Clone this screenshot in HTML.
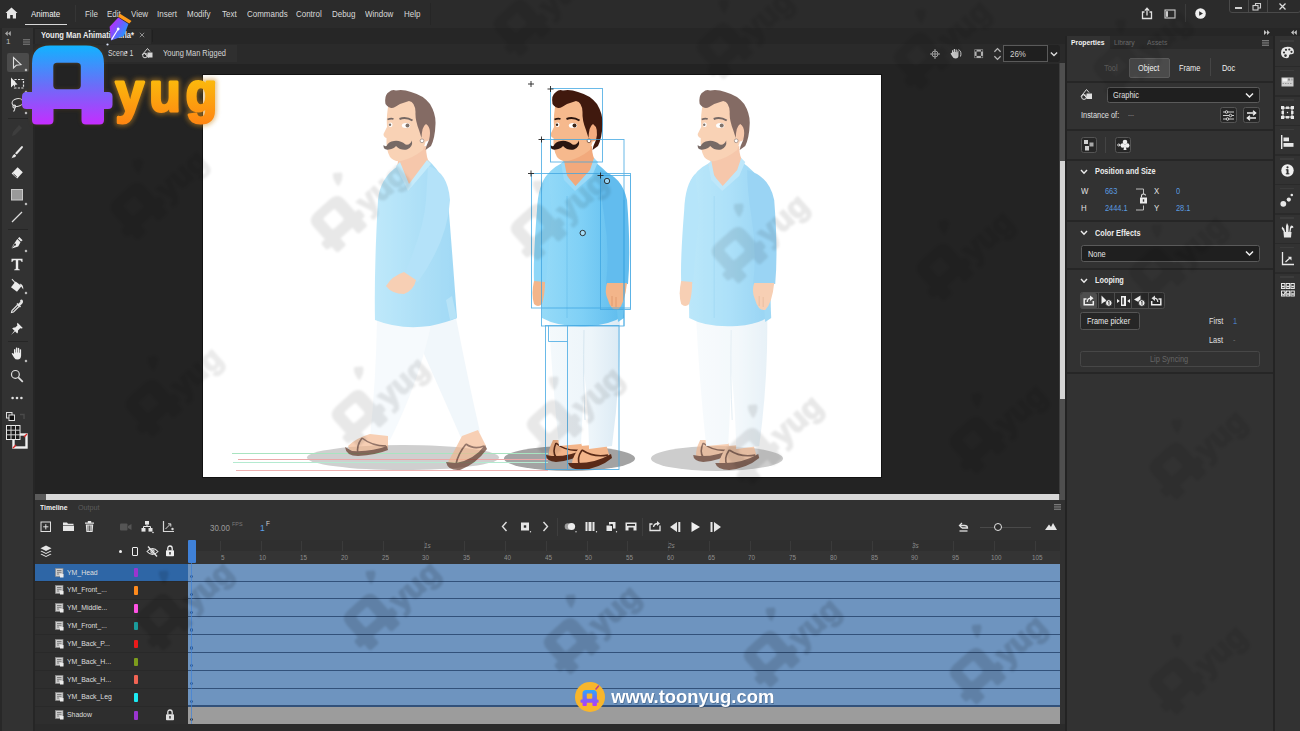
<!DOCTYPE html>
<html lang="en">
<head>
<meta charset="utf-8">
<title>Young Man Animation - Animate</title>
<style>
*{box-sizing:border-box;margin:0;padding:0}
html,body{width:1300px;height:731px;overflow:hidden;background:#242424}
body{font-family:"Liberation Sans",sans-serif;font-size:9px;color:#e4e4e4;position:relative}
#app{position:absolute;left:0;top:0;width:1300px;height:731px;overflow:hidden;background:#242424}
.abs{position:absolute}
.t{position:absolute;white-space:nowrap;line-height:12px;height:12px;transform-origin:0 50%;transform:scaleX(.9)}
svg{position:absolute;overflow:visible}
.p{font-size:8.500px;transform:scaleX(.87)}
.m{font-size:9px;color:#dadada;transform:scaleX(.885)}
/* top bars */
#menubar{left:0;top:0;width:1300px;height:28px;background:#2b2b2b}
#tabbar{left:0;top:28px;width:1066px;height:16px;background:#262626}
#scenebar{left:33px;top:44px;width:1033px;height:20px;background:#2a2a2a}
#tools{left:0;top:28px;width:33px;height:703px;background:#323232}
#stagebg{left:33px;top:64px;width:1027px;height:430px;background:#232323}
#canvas{left:202.700px;top:74.800px;width:678.800px;height:402.300px;background:#fff;outline:1px solid #121212}
/* scrollbars */
#vtrack{left:1059px;top:63px;width:6px;height:430px;background:#3c3c3c}
#htrack{left:35px;top:494px;width:1027px;height:6px;background:#5a5a5a}
/* timeline */
#timeline{left:35px;top:500px;width:1030px;height:231px;background:#313131}
/* properties */
#props{left:1067px;top:36px;width:206px;height:695px;background:#323232}
#strip{left:1275px;top:36px;width:25px;height:695px;background:#323232}
</style>
</head>
<body>
<div id="app">
<div id="menubar" class="abs"></div>
<div id="tabbar" class="abs"></div>
<div id="scenebar" class="abs"></div>
<div id="stagebg" class="abs"></div>
<div id="canvas" class="abs"></div>
<div id="tools" class="abs"></div>
<div id="vtrack" class="abs"></div>
<div id="htrack" class="abs"></div>
<div id="timeline" class="abs"></div>
<div id="props" class="abs"></div>
<div id="strip" class="abs"></div>
<!--MENU--><div id="helpsep" class="abs" style="left:430px;top:3px;width:1px;height:22px;background:#262626"></div><div id="gapbar" class="abs" style="left:1066px;top:28px;width:234px;height:8px;background:#262626"></div><div class="abs" style="left:35px;top:29px;width:116px;height:15px;background:#2d2d2d"></div>
<div class="abs" style="left:60px;top:45px;width:177px;height:16.500px;background:#2f2f2f"></div>
<div class="abs" style="left:1065.200px;top:36px;width:1.800px;height:695px;background:#232323"></div>
<div class="abs" style="left:33px;top:63px;width:2px;height:668px;background:#262626"></div>

<div class="abs" style="left:1229px;top:-1px;width:72px;height:14px;border:1px solid #4a4a4a;border-radius:0 0 3px 3px"></div>
<div class="abs" style="left:1248px;top:0;width:1px;height:13px;background:#4a4a4a"></div>
<div class="abs" style="left:1267px;top:0;width:1px;height:13px;background:#4a4a4a"></div>
<div class="abs" style="left:1235px;top:7px;width:7px;height:2px;background:#d0d0d0"></div>
<svg style="left:1252px;top:2px" width="10" height="10" viewBox="0 0 10 10" fill="none" stroke="#cfcfcf" stroke-width="1.1"><rect x="1" y="3.5" width="5" height="4.5"/><path d="M3.5 3.5V1.5H8.5V6H6"/></svg>
<svg style="left:1278px;top:2px" width="9" height="9" viewBox="0 0 9 9" stroke="#dcdcdc" stroke-width="1.3"><path d="M1.5 1.5L7.5 7.5M7.5 1.5L1.5 7.5"/></svg>
<svg style="left:5px;top:7px" width="13" height="12" viewBox="0 0 13 12"><path d="M6.5 .5L.5 6H2V11.5H5.2V8H7.8V11.5H11V6H12.5Z" fill="#e6e6e6"/></svg>
<span class="t m" style="left:31px;top:7.500px;color:#f2f2f2">Animate</span>
<div class="abs" style="left:25px;top:24px;width:42px;height:1px;background:#d8d8d8"></div>
<div class="abs" style="left:75px;top:5px;width:1px;height:17px;background:#353535"></div>
<span class="t m" style="left:84.5px;top:7.500px">File</span>
<span class="t m" style="left:107px;top:7.500px">Edit</span>
<span class="t m" style="left:130.5px;top:7.500px">View</span>
<span class="t m" style="left:157px;top:7.500px">Insert</span>
<span class="t m" style="left:186.5px;top:7.500px">Modify</span>
<span class="t m" style="left:222px;top:7.500px">Text</span>
<span class="t m" style="left:246.5px;top:7.500px">Commands</span>
<span class="t m" style="left:296px;top:7.500px">Control</span>
<span class="t m" style="left:332px;top:7.500px">Debug</span>
<span class="t m" style="left:365px;top:7.500px">Window</span>
<span class="t m" style="left:404px;top:7.500px">Help</span>
<svg style="left:1141px;top:7px" width="12" height="13" viewBox="0 0 12 13" fill="none" stroke="#e0e0e0" stroke-width="1.3"><path d="M3.5 5H1.5V11.5H10.5V5H8.5"/><path d="M6 8.5V1.5M3.8 3.6L6 1.3L8.2 3.6"/></svg>
<svg style="left:1164px;top:9px" width="12" height="10" viewBox="0 0 12 10" fill="none" stroke="#cfcfcf" stroke-width="1.1"><rect x="1" y="1" width="10" height="8"/><rect x="2" y="2.2" width="2" height="5.6" fill="#cfcfcf" stroke="none"/></svg>
<div class="abs" style="left:1185px;top:4px;width:1px;height:18px;background:#3c3c3c"></div>
<svg style="left:1195px;top:8px" width="11" height="11" viewBox="0 0 11 11"><circle cx="5.5" cy="5.5" r="5.3" fill="#f0f0f0"/><path d="M4.2 3.2V7.8L8 5.5Z" fill="#2b2b2b"/></svg>
<!-- collapse arrows -->
<svg style="left:1264px;top:30px" width="6" height="5" viewBox="0 0 6 5" fill="#c4c4c4"><path d="M0 0L2.800 2.500L0 5ZM3 0L5.800 2.500L3 5Z"/></svg>
<svg style="left:1291px;top:30px" width="6" height="5" viewBox="0 0 6 5" fill="#c4c4c4"><path d="M2.800 0L0 2.500L2.800 5ZM5.800 0L3 2.500L5.800 5Z"/></svg>
<svg style="left:4.500px;top:30.500px" width="6" height="5" viewBox="0 0 6 5" fill="#a8a8a8"><path d="M2.800 0L0 2.500L2.800 5ZM5.800 0L3 2.500L5.800 5Z"/></svg>
<!-- doc tab -->
<span class="t" style="left:41px;top:29px;font-weight:bold;color:#ececec;font-size:8.5px;transform:scaleX(.89)">Young Man Animation.fla*</span>
<svg style="left:139px;top:32px" width="6" height="6" viewBox="0 0 6 6" stroke="#9a9a9a" stroke-width=".9"><path d="M.8 .8L5.2 5.2M5.2 .8L.8 5.2"/></svg>
<div class="abs" style="left:152px;top:30px;width:1px;height:12px;background:#202020"></div>
<!-- scene bar -->
<span class="t m" style="left:107.500px;top:47px;color:#d6d6d6;transform:scaleX(.77)">Scene 1</span>
<svg style="left:141px;top:47px" width="13" height="12" viewBox="0 0 13 12" fill="none" stroke="#d6d6d6" stroke-width="1"><path d="M1 8L6.5 1.5L9 4.5"/><path d="M3.5 6.5L8 10.5"/><circle cx="4" cy="8.5" r="2.3"/><rect x="6.5" y="5.5" width="5" height="5" fill="#d6d6d6" stroke="none"/></svg>
<span class="t m" style="left:162.500px;top:47px;color:#d6d6d6;transform:scaleX(.825)">Young Man Rigged</span>
<!-- stage controls -->
<svg style="left:929.500px;top:48.500px" width="10" height="10" viewBox="0 0 11 11" fill="none" stroke="#b8b8b8" stroke-width="1"><circle cx="5.5" cy="5.5" r="3.3"/><path d="M5.5 0V11M0 5.5H11"/></svg>
<svg style="left:949px;top:47px" width="14" height="13" viewBox="0 0 14 13" fill="#c8c8c8"><path d="M3 5.5V3.2h1.2V5h.6V2h1.2V5h.6V2.4h1.2V5.2h.6V3.4h1.1V8.5Q9.5 11.5 6.5 11.5Q4.3 11.5 3.2 9.3L1.5 6.6L2.4 6Z"/><path d="M9.5 2.5Q13 4.5 11.5 9.5" fill="none" stroke="#c8c8c8"/></svg>
<svg style="left:974px;top:49px" width="9.500" height="9.500" viewBox="0 0 11 11"><rect x=".5" y=".5" width="10" height="10" fill="#b0b0b0"/><rect x="3" y="3" width="5" height="5" fill="#2c2c2c"/><rect x="1" y="1" width="2" height="2" fill="#2c2c2c"/><rect x="8" y="1" width="2" height="2" fill="#2c2c2c"/><rect x="1" y="8" width="2" height="2" fill="#2c2c2c"/><rect x="8" y="8" width="2" height="2" fill="#2c2c2c"/></svg>
<svg style="left:993px;top:46px" width="9" height="16" viewBox="0 0 10 18" fill="none" stroke="#b8b8b8" stroke-width="1.4"><path d="M1.5 6.5L5 3L8.5 6.5M1.5 11.5L5 15L8.5 11.5"/></svg>
<div class="abs" style="left:1003px;top:45px;width:45px;height:17px;background:#1f1f1f;border:1px solid #5a5a5a"></div>
<span class="t m" style="left:1010px;top:47.5px;color:#d0d0d0">26%</span>
<div class="abs" style="left:1048px;top:45px;width:11.500px;height:17px;background:#222;border-radius:0 3px 3px 0"></div><svg style="left:1049.500px;top:50.500px" width="8" height="6.500" viewBox="0 0 9 7" fill="none" stroke="#dcdcdc" stroke-width="1.5"><path d="M1 1.5L4.5 5L8 1.5"/></svg>
<!--/MENU-->
<!--TOOLS--><div class="abs" style="left:0;top:28px;width:1.500px;height:703px;background:#282828"></div><div class="abs" style="left:8px;top:118px;width:20px;height:1px;background:#262626"></div>
<span class="t" style="left:6px;top:36px;font-size:8px;color:#bdbdbd;transform:none">1</span>
<svg style="left:23px;top:39px" width="7" height="6" viewBox="0 0 7 6" fill="#6c6c6c"><rect width="7" height="1.4"/><rect y="2.3" width="7" height="1.4"/><rect y="4.6" width="7" height="1.4"/></svg>
<div class="abs" style="left:6.5px;top:53px;width:22px;height:19px;background:#4b4b4b;border-radius:2px"></div>
<svg style="left:12px;top:56px" width="11" height="14" viewBox="0 0 11 14" fill="none" stroke="#dedede" stroke-width="1.1"><path d="M1.5 1.5V12L4.3 9.3L9 8.7Z"/></svg>
<svg style="left:9px;top:76px" width="18" height="16" viewBox="0 0 18 16"><rect x="5.5" y="3.5" width="9" height="8.5" fill="none" stroke="#e0e0e0" stroke-width="1.2" stroke-dasharray="2.2 1.3"/><path d="M2 1.5V11.5L4.6 9L8.5 8.6Z" fill="#ececec"/></svg>
<svg style="left:10px;top:97px" width="15" height="16" viewBox="0 0 15 16" fill="none" stroke="#dcdcdc" stroke-width="1.1"><ellipse cx="7.5" cy="5.5" rx="5.5" ry="3.8" transform="rotate(-12 7.5 5.5)"/><circle cx="4.3" cy="9.5" r="1.4"/><path d="M4.8 11Q5 13 3.5 14.5"/></svg>
<svg style="left:11px;top:124px" width="12" height="13" viewBox="0 0 12 13" fill="#3d3d3d"><path d="M8 1L11 4L4 11L1 12L2 8Z"/></svg>
<svg style="left:10px;top:145px" width="14" height="15" viewBox="0 0 14 15" fill="#e8e8e8"><path d="M12.5 1.2Q13.4 1.8 12.7 2.8L6.8 9.6L5 8.2L11.2 1.4Q11.8.8 12.5 1.2Z"/><path d="M4.3 8.9L6.1 10.3Q5.8 12.5 3.6 12.6Q2.4 12.8 1.5 13.6Q2.6 10 4.3 8.9Z"/></svg>
<svg style="left:10px;top:166px" width="14" height="14" viewBox="0 0 14 14"><path d="M7.6 1.2L12.8 6.2L7.2 12.5L1.6 7.5Z" fill="#ececec"/><path d="M3.5 8L6.8 11" stroke="#323232" stroke-width="1"/></svg>
<svg style="left:11px;top:189px" width="15" height="15" viewBox="0 0 15 15"><rect x=".5" y=".5" width="11" height="10.5" fill="#9a9a9a" stroke="#c9c9c9"/></svg>
<svg style="left:11px;top:211px" width="12" height="12" viewBox="0 0 12 12" stroke="#dcdcdc" stroke-width="1.2"><path d="M1 11L11 1"/></svg>
<div class="abs" style="left:8px;top:229px;width:20px;height:1px;background:#262626"></div>
<svg style="left:10px;top:236px" width="14" height="14" viewBox="0 0 14 14" fill="#ececec"><path d="M9.3 1L12.6 4.3L11 5.6L7.9 2.5Z"/><path d="M7.3 3.1L10.5 6.3L8.2 10.5L1.6 12.6L4.6 9.6Q5.8 9.8 6 8.7Q6 7.4 4.8 7.6Q3.8 7.8 4 9L1.2 12Z"/></svg>
<svg style="left:11px;top:258px" width="12" height="13" viewBox="0 0 12 13" fill="#ececec"><path d="M.5 .8H11.5V4H10.6Q10.4 2.3 9 2.2H7.2V10.4Q7.3 11.4 8.8 11.5V12.3H3.2V11.5Q4.7 11.4 4.8 10.4V2.2H3Q1.6 2.3 1.4 4H.5Z"/></svg>
<svg style="left:10px;top:278px" width="15" height="15" viewBox="0 0 15 15" fill="#ececec"><path d="M5.6 3.4L11.6 8L7 13.8L1 9.2Z"/><path d="M2.2 .8L6.6 5.6L6 6.2L1.6 1.4Z"/><path d="M9.8 5.6Q13.5 6.5 13.3 11.5Q12 9.5 10.6 7.4Z"/></svg>
<svg style="left:10px;top:300px" width="14" height="14" viewBox="0 0 14 14" fill="none" stroke="#e4e4e4" stroke-width="1.1"><path d="M7.5 5L2 10.5L1.5 12.5L3.5 12L9 6.5"/><path d="M7 3.5L10.5 7" stroke-width="1.6"/><path d="M8.8 5.2L11 3Q12.3 1.6 11.4 .9" stroke-width="2.6" stroke-linecap="round"/></svg>
<svg style="left:10px;top:322px" width="14" height="14" viewBox="0 0 14 14" fill="#ececec"><path d="M7.6 .8L12.8 6L11.6 6.6L10.2 6.2L8 8.4Q8.4 10.4 7.2 11.4L2.2 6.4Q3.4 5.2 5.2 5.6L7.4 3.4L7 2Z"/><path d="M4.4 8.8L5 9.4L1 13Z"/></svg>
<div class="abs" style="left:8px;top:341px;width:20px;height:1px;background:#262626"></div>
<svg style="left:10px;top:346px" width="15" height="15" viewBox="0 0 15 15" fill="#ececec"><path d="M4 8V3.4Q4.7 2.6 5.4 3.4V6.6H5.9V1.8Q6.6 1 7.3 1.8V6.4H7.8V2.2Q8.5 1.4 9.2 2.2V6.8H9.7V3.6Q10.4 2.8 11.1 3.6V9.5Q11 13.4 7.6 13.6Q5.2 13.6 4 11.4L1.6 7.6Q2.4 6.6 3.4 7.6Z"/></svg>
<svg style="left:10px;top:369px" width="14" height="14" viewBox="0 0 14 14" fill="none" stroke="#dedede" stroke-width="1.2"><circle cx="5.4" cy="5.4" r="3.9"/><path d="M8.3 8.3L12.8 12.8" stroke-width="1.7"/></svg>
<svg style="left:11px;top:396px" width="12" height="4" viewBox="0 0 12 4" fill="#e0e0e0"><circle cx="1.6" cy="2" r="1.3"/><circle cx="6" cy="2" r="1.3"/><circle cx="10.4" cy="2" r="1.3"/></svg>
<svg style="left:6px;top:412px" width="22" height="10" viewBox="0 0 22 10"><rect x=".5" y=".5" width="5.5" height="5.5" fill="#323232" stroke="#dcdcdc"/><rect x="3" y="3" width="5.5" height="5.5" fill="#111" stroke="#dcdcdc"/><path d="M14 2.5H18V7" fill="none" stroke="#4a4a4a" stroke-width="1.4"/></svg>
<svg style="left:6px;top:425px" width="22" height="24" viewBox="0 0 22 24"><rect x="7.5" y="9.5" width="13" height="13" fill="none" stroke="#f0f0f0" stroke-width="2.4"/><path d="M7 23L21 9" stroke="#e02020" stroke-width="1.3"/><rect x="9.6" y="11.6" width="8.8" height="8.8" fill="#323232"/><rect x=".5" y=".5" width="13.5" height="14" fill="#1a1a1a" stroke="#e8e8e8"/><path d="M5 .5V14.5M9.5 .5V14.5M.5 5.2H14M.5 9.8H14" stroke="#d0d0d0" stroke-width="1"/></svg>
<div class="abs" style="left:25px;top:69px;width:2px;height:2px;background:#d0d0d0;transform:rotate(45deg)"></div>
<div class="abs" style="left:25px;top:91px;width:2px;height:2px;background:#d0d0d0;transform:rotate(45deg)"></div>
<div class="abs" style="left:25px;top:112px;width:2px;height:2px;background:#d0d0d0;transform:rotate(45deg)"></div>
<div class="abs" style="left:25px;top:203px;width:2px;height:2px;background:#d0d0d0;transform:rotate(45deg)"></div>
<div class="abs" style="left:25px;top:250px;width:2px;height:2px;background:#d0d0d0;transform:rotate(45deg)"></div>
<div class="abs" style="left:25px;top:292px;width:2px;height:2px;background:#d0d0d0;transform:rotate(45deg)"></div>
<div class="abs" style="left:25px;top:360px;width:2px;height:2px;background:#d0d0d0;transform:rotate(45deg)"></div>
<!--/TOOLS-->
<!--STAGE--><svg id="stage" style="left:0;top:0" width="1300" height="731" viewBox="0 0 1300 731">
<ellipse cx="403" cy="457.500" rx="96" ry="12.500" fill="#cfcfcf"/>
<ellipse cx="569.500" cy="458.500" rx="65.500" ry="12.500" fill="#a3a3a3"/>
<ellipse cx="717" cy="458.500" rx="66" ry="12.500" fill="#cdcdcd"/>
<g stroke-width="1" fill="none"><path d="M232 453.500H548" stroke="#a8e4c0"/><path d="M238 459.500H548" stroke="#eaa8a8"/><path d="M233 462.500H548" stroke="#b4ead0"/><path d="M236 470.500H548" stroke="#eeb0b0"/></g>
<g opacity="0.64">
<linearGradient id="shw" x1="376" y1="0" x2="456" y2="0" gradientUnits="userSpaceOnUse"><stop offset="0" stop-color="#9adcf8"/><stop offset="1" stop-color="#6cc4f0"/></linearGradient>
<!-- back leg (right) -->
<path d="M415 320L456 318Q468 380 480 432L462 440Q440 390 420 345Z" fill="#eaf3f9"/>
<path d="M462 436Q456 448 448 462Q452 470 462 468Q478 460 486 446L478 430Z" fill="#f3b58a"/>
<path d="M446 462Q448 471 460 470Q476 464 487 449L485 445Q474 460 456 463Z" fill="#5a2a17"/>
<path d="M466 444Q458 454 456 464M466 444Q474 450 484 446" fill="none" stroke="#5a2a17" stroke-width="1.600"/>
<!-- front leg (left) -->
<path d="M377 320L432 320Q420 380 390 440L370 438Q376 380 377 320Z" fill="#f2f8fc"/>
<path d="M370 434Q356 438 348 446Q350 454 362 454Q378 452 388 448L388 436Z" fill="#f3b58a"/>
<path d="M345 447Q346 456 358 456Q376 455 388 450L387 446Q372 452 352 451Z" fill="#5a2a17"/>
<path d="M362 438Q356 446 358 454M362 438Q372 446 386 446" fill="none" stroke="#5a2a17" stroke-width="1.600"/>
<!-- torso -->
<path d="M398 166Q380 178 378 200Q374 270 375 320Q400 330 430 326Q448 322 457 318Q452 250 448 200Q446 176 428 160L408 186Z" fill="url(#shw)"/>
<path d="M446 300L452 296L457 318L450 320Z" fill="#8fd4f4"/>
<!-- arm -->
<path d="M428 166Q448 172 450 200Q448 240 418 282L404 274Q424 230 426 200Z" fill="#8ad3f6"/>
<path d="M404 272Q392 276 386 286Q392 294 404 294Q414 290 416 280Z" fill="#f3b58a"/>
<!-- neck -->
<path d="M398 150L426 146Q426 158 430 164L408 188L397 166Q399 160 398 150Z" fill="#f2a97c"/>
<path d="M396 166L400 162L409 184L427 160L431 164L408 191Z" fill="#a6e0fa"/>
<g transform="translate(-167 0)">
<!-- face -->
<path d="M556 102Q553 116 554 127L550.500 134Q550.500 137 553.500 138Q553 150 557 157Q561 162 568 161Q580 158 590 150L597 128L588 100Z" fill="#f6b98d"/>
<ellipse cx="593.500" cy="133" rx="4.600" ry="8.500" fill="#f3ab7e"/>
<circle cx="589" cy="140.800" r="1.900" fill="#fff" stroke="#5a3a2a" stroke-width=".700"/>
<!-- hair -->
<path d="M552.500 104Q551 95 556 92Q559 89 563 90.500Q570 89 578 92Q590 95 597 104Q603 114 602.500 124Q602 138 598 146L592.500 150Q593 146 596 140Q599 128 593 124Q589 126 588.500 138L586 130Q582 120 582.500 112Q582 102 576 101Q568 103 562 107Q557 110 552.500 104Z" fill="#40190e"/>
<!-- brows/eyes -->
<path d="M566.500 119Q573 116.500 579.500 120.500" stroke="#2a140e" stroke-width="2" fill="none"/>
<path d="M554.500 119.500Q558 118 560.500 119" stroke="#2a140e" stroke-width="1.700" fill="none"/>
<ellipse cx="573" cy="125.500" rx="4.200" ry="2.500" fill="#fff"/><circle cx="574.500" cy="125.500" r="2" fill="#3a2416"/>
<ellipse cx="557.500" cy="124.800" rx="2" ry="2.200" fill="#fff"/><circle cx="557" cy="124.800" r="1.200" fill="#3a2416"/>
<!-- moustache -->
<path d="M550.500 145Q550 150.500 556 149.500Q561 148.500 563 146Q568 151 574 149.500Q580 147 579 140.500Q577 145.500 572.500 144.500Q567 140 561 141Q555.500 141.500 553.500 146Q551.500 146.500 550.500 145Z" fill="#2a1510"/>
</g>
</g>
<g transform="translate(147.2 0)" opacity="0.64">
<linearGradient id="shr" x1="534" y1="0" x2="630" y2="0" gradientUnits="userSpaceOnUse"><stop offset="0" stop-color="#9adcf8"/><stop offset=".5" stop-color="#7fd0f6"/><stop offset="1" stop-color="#58b8ec"/></linearGradient>
<linearGradient id="ptr" x1="548" y1="0" x2="620" y2="0" gradientUnits="userSpaceOnUse"><stop offset="0" stop-color="#f4f9fc"/><stop offset=".6" stop-color="#edf5fa"/><stop offset="1" stop-color="#dbeaf4"/></linearGradient>
<!-- feet -->
<path d="M553 440Q548 450 549 456Q560 462 584 452L580 440Z" fill="#f3b58a"/>
<path d="M546 455Q546 461 556 462Q572 461 586 452L585 449Q568 457 552 456Z" fill="#5a2a17"/>
<path d="M556 443Q552 452 556 457M556 443Q566 452 582 450" fill="none" stroke="#5a2a17" stroke-width="1.600"/>
<path d="M580 446Q572 458 572 463Q590 468 610 458L606 444Z" fill="#f3b58a"/>
<path d="M568 463Q570 470 582 470Q600 468 612 458L611 454Q594 464 574 463Z" fill="#5a2a17"/>
<path d="M582 450Q576 459 580 465M582 450Q594 458 608 455" fill="none" stroke="#5a2a17" stroke-width="1.600"/>
<!-- pants -->
<path d="M549 318L620 314Q621 380 612 446L589 449Q588 400 584 372Q583 410 581 444L559 446Q552 380 549 318Z" fill="url(#ptr)"/>
<path d="M584 330Q583 380 585 420" fill="none" stroke="#d6e6f0" stroke-width="1"/>
<!-- torso -->
<path d="M562 163Q548 170 543 182Q541 250 542 318Q560 328 590 326Q612 324 623 316Q624 250 622 200Q618 178 592 160L575 188Z" fill="url(#shr)"/>
<path d="M616 300L623 296L624 318L618 322Z" fill="#6cc4f0"/>
<!-- back arm (right side of picture) -->
<path d="M600 170Q622 176 627 200Q631 250 628 284L606 284Q610 250 604 215Q600 190 600 170Z" fill="#62bcee"/>
<path d="M607 283Q604 292 608 300Q611 311 618 310Q625 303 627 283Z" fill="#f3b58a"/>
<path d="M612 296V306M616 297V307" stroke="#dc9468" stroke-width=".8"/>
<!-- front arm (left) -->
<path d="M548 174Q538 184 537 210Q533 260 534 282L546 284Q548 250 552 215Z" fill="#8ed7f8"/>
<path d="M534 281Q531 294 534 304Q538 308 542 304Q545 294 545 282Z" fill="#f3b58a"/>
<path d="M567 196V318" stroke="#6cc2ee" stroke-width=".800" fill="none"/>
<!-- neck -->
<path d="M565 152L592 146Q592 158 597 163L575 189L561 165Q566 160 565 152Z" fill="#f2a97c"/>
<path d="M561 164L564 160.500L567 176L575.500 186L590 170L594 158L598 162L592 176L575 191L564 180Z" fill="#9bdaf8"/>
<g transform="translate(0 0)">
<!-- face -->
<path d="M556 102Q553 116 554 127L550.500 134Q550.500 137 553.500 138Q553 150 557 157Q561 162 568 161Q580 158 590 150L597 128L588 100Z" fill="#f6b98d"/>
<ellipse cx="593.500" cy="133" rx="4.600" ry="8.500" fill="#f3ab7e"/>
<circle cx="589" cy="140.800" r="1.900" fill="#fff" stroke="#5a3a2a" stroke-width=".700"/>
<!-- hair -->
<path d="M552.500 104Q551 95 556 92Q559 89 563 90.500Q570 89 578 92Q590 95 597 104Q603 114 602.500 124Q602 138 598 146L592.500 150Q593 146 596 140Q599 128 593 124Q589 126 588.500 138L586 130Q582 120 582.500 112Q582 102 576 101Q568 103 562 107Q557 110 552.500 104Z" fill="#40190e"/>
<!-- brows/eyes -->
<path d="M566.500 119Q573 116.500 579.500 120.500" stroke="#2a140e" stroke-width="2" fill="none"/>
<path d="M554.500 119.500Q558 118 560.500 119" stroke="#2a140e" stroke-width="1.700" fill="none"/>
<ellipse cx="573" cy="125.500" rx="4.200" ry="2.500" fill="#fff"/><circle cx="574.500" cy="125.500" r="2" fill="#3a2416"/>
<ellipse cx="557.500" cy="124.800" rx="2" ry="2.200" fill="#fff"/><circle cx="557" cy="124.800" r="1.200" fill="#3a2416"/>
<!-- moustache -->
<path d="M550.500 145Q550 150.500 556 149.500Q561 148.500 563 146Q568 151 574 149.500Q580 147 579 140.500Q577 145.500 572.500 144.500Q567 140 561 141Q555.500 141.500 553.500 146Q551.500 146.500 550.500 145Z" fill="#2a1510"/>
</g>
</g>
<g transform="translate(0 0)" opacity="1">
<linearGradient id="shm" x1="534" y1="0" x2="630" y2="0" gradientUnits="userSpaceOnUse"><stop offset="0" stop-color="#9adcf8"/><stop offset=".5" stop-color="#7fd0f6"/><stop offset="1" stop-color="#58b8ec"/></linearGradient>
<linearGradient id="ptm" x1="548" y1="0" x2="620" y2="0" gradientUnits="userSpaceOnUse"><stop offset="0" stop-color="#f4f9fc"/><stop offset=".6" stop-color="#edf5fa"/><stop offset="1" stop-color="#dbeaf4"/></linearGradient>
<!-- feet -->
<path d="M553 440Q548 450 549 456Q560 462 584 452L580 440Z" fill="#f3b58a"/>
<path d="M546 455Q546 461 556 462Q572 461 586 452L585 449Q568 457 552 456Z" fill="#5a2a17"/>
<path d="M556 443Q552 452 556 457M556 443Q566 452 582 450" fill="none" stroke="#5a2a17" stroke-width="1.600"/>
<path d="M580 446Q572 458 572 463Q590 468 610 458L606 444Z" fill="#f3b58a"/>
<path d="M568 463Q570 470 582 470Q600 468 612 458L611 454Q594 464 574 463Z" fill="#5a2a17"/>
<path d="M582 450Q576 459 580 465M582 450Q594 458 608 455" fill="none" stroke="#5a2a17" stroke-width="1.600"/>
<!-- pants -->
<path d="M549 318L620 314Q621 380 612 446L589 449Q588 400 584 372Q583 410 581 444L559 446Q552 380 549 318Z" fill="url(#ptm)"/>
<path d="M584 330Q583 380 585 420" fill="none" stroke="#d6e6f0" stroke-width="1"/>
<!-- torso -->
<path d="M562 163Q548 170 543 182Q541 250 542 318Q560 328 590 326Q612 324 623 316Q624 250 622 200Q618 178 592 160L575 188Z" fill="url(#shm)"/>
<path d="M616 300L623 296L624 318L618 322Z" fill="#6cc4f0"/>
<!-- back arm (right side of picture) -->
<path d="M600 170Q622 176 627 200Q631 250 628 284L606 284Q610 250 604 215Q600 190 600 170Z" fill="#62bcee"/>
<path d="M607 283Q604 292 608 300Q611 311 618 310Q625 303 627 283Z" fill="#f3b58a"/>
<path d="M612 296V306M616 297V307" stroke="#dc9468" stroke-width=".8"/>
<!-- front arm (left) -->
<path d="M548 174Q538 184 537 210Q533 260 534 282L546 284Q548 250 552 215Z" fill="#8ed7f8"/>
<path d="M534 281Q531 294 534 304Q538 308 542 304Q545 294 545 282Z" fill="#f3b58a"/>
<path d="M567 196V318" stroke="#6cc2ee" stroke-width=".800" fill="none"/>
<!-- neck -->
<path d="M565 152L592 146Q592 158 597 163L575 189L561 165Q566 160 565 152Z" fill="#f2a97c"/>
<path d="M561 164L564 160.500L567 176L575.500 186L590 170L594 158L598 162L592 176L575 191L564 180Z" fill="#9bdaf8"/>
<g transform="translate(0 0)">
<!-- face -->
<path d="M556 102Q553 116 554 127L550.500 134Q550.500 137 553.500 138Q553 150 557 157Q561 162 568 161Q580 158 590 150L597 128L588 100Z" fill="#f6b98d"/>
<ellipse cx="593.500" cy="133" rx="4.600" ry="8.500" fill="#f3ab7e"/>
<circle cx="589" cy="140.800" r="1.900" fill="#fff" stroke="#5a3a2a" stroke-width=".700"/>
<!-- hair -->
<path d="M552.500 104Q551 95 556 92Q559 89 563 90.500Q570 89 578 92Q590 95 597 104Q603 114 602.500 124Q602 138 598 146L592.500 150Q593 146 596 140Q599 128 593 124Q589 126 588.500 138L586 130Q582 120 582.500 112Q582 102 576 101Q568 103 562 107Q557 110 552.500 104Z" fill="#40190e"/>
<!-- brows/eyes -->
<path d="M566.500 119Q573 116.500 579.500 120.500" stroke="#2a140e" stroke-width="2" fill="none"/>
<path d="M554.500 119.500Q558 118 560.500 119" stroke="#2a140e" stroke-width="1.700" fill="none"/>
<ellipse cx="573" cy="125.500" rx="4.200" ry="2.500" fill="#fff"/><circle cx="574.500" cy="125.500" r="2" fill="#3a2416"/>
<ellipse cx="557.500" cy="124.800" rx="2" ry="2.200" fill="#fff"/><circle cx="557" cy="124.800" r="1.200" fill="#3a2416"/>
<!-- moustache -->
<path d="M550.500 145Q550 150.500 556 149.500Q561 148.500 563 146Q568 151 574 149.500Q580 147 579 140.500Q577 145.500 572.500 144.500Q567 140 561 141Q555.500 141.500 553.500 146Q551.500 146.500 550.500 145Z" fill="#2a1510"/>
</g>
</g>
<g fill="none" stroke="#3fa6e2" stroke-width=".9" opacity=".85">
<rect x="550.500" y="88.500" width="52" height="73.500"/>
<rect x="541.500" y="139.500" width="82.500" height="186.500"/>
<rect x="531.500" y="173.500" width="99" height="134.500"/>
<rect x="600.500" y="175.500" width="30" height="134"/>
<rect x="545.500" y="325.500" width="73.500" height="144"/>
<path d="M567.500 325V469M548.500 341.500H567.500M548.500 325V341.500"/>
<path d="M624 200V326"/>
</g>
<g stroke="#222" stroke-width=".9" fill="none">
<path d="M528 84H534M531 81V87M547.500 89H553.500M550.500 86V92M538.500 139.500H544.500M541.500 136.500V142.500M528 173.500H534M531 170.500V176.500M597.500 175.500H603.500M600.500 172.500V178.500"/>
<circle cx="607" cy="181" r="2.700" fill="#bfe6f8" fill-opacity=".6"/><circle cx="582.700" cy="233" r="2.700" fill="#bfe6f8" fill-opacity=".6"/>
</g>
</svg>
<!--/STAGE-->
<!--TIMELINE--><span class="t" style="left:40px;top:501.5px;font-weight:bold;font-size:8px;color:#f0f0f0;transform:scaleX(.85)">Timeline</span>
<span class="t" style="left:78px;top:501.5px;font-size:8px;color:#5c5c5c;transform:scaleX(.9)">Output</span>
<svg style="left:1054px;top:504px" width="7" height="6" viewBox="0 0 7 6" fill="#7a7a7a"><rect width="7" height="1.300"/><rect y="2.300" width="7" height="1.300"/><rect y="4.600" width="7" height="1.300"/></svg>
<svg style="left:40px;top:521px" width="12" height="12" viewBox="0 0 12 12" fill="none" stroke="#e0e0e0" stroke-width="1"><rect x="1" y="1" width="9.500" height="9.500"/><path d="M5.800 3.200V8.400M3.200 5.800H8.400"/></svg>
<svg style="left:62px;top:521px" width="13" height="11" viewBox="0 0 13 11" fill="#e6e6e6"><path d="M1 1.500H5L6 2.800H11.500V4H1Z"/><path d="M1 4.600H12V10H1Z"/></svg>
<svg style="left:84px;top:520px" width="11" height="13" viewBox="0 0 11 13" fill="#e6e6e6"><path d="M1 2.500H10V3.800H1ZM3.800 1H7.200V2.500H3.800Z"/><path d="M1.800 4.500H9.200L8.600 12H2.400Z"/><path d="M4 5.500V11M5.500 5.500V11M7 5.500V11" stroke="#2c2c2c" stroke-width=".700"/></svg>
<svg style="left:120px;top:523px" width="12" height="8" viewBox="0 0 12 8" fill="#555"><rect x="0" y=".500" width="7.500" height="7" rx="1"/><path d="M8 3L11.500 1V7L8 5Z"/></svg>
<svg style="left:141px;top:520px" width="13" height="14" viewBox="0 0 13 14" fill="#e4e4e4"><rect x="4" y="1" width="4" height="3.600"/><rect x="0.500" y="8" width="4" height="3.600"/><rect x="7.500" y="8" width="4" height="3.600"/><path d="M6 4.500V6.500M2.500 8V6.500H9.500V8" fill="none" stroke="#e4e4e4" stroke-width="1"/><circle cx="12" cy="12.500" r=".800"/></svg>
<svg style="left:162px;top:520px" width="13" height="13" viewBox="0 0 13 13" fill="none" stroke="#d8d8d8" stroke-width="1.200"><path d="M1.500 1V11.500H12"/><path d="M3.500 9L8.500 4M6 3.800H8.800V6.600" stroke-width="1"/><circle cx="10.500" cy="9" r=".600"/></svg>
<span class="t" style="left:210px;top:521.5px;font-size:9px;color:#9c9c9c;transform:scaleX(.88)">30.00</span>
<span class="t" style="left:232px;top:517.5px;font-size:6px;color:#7a7a7a;transform:scaleX(.9)">FPS</span>
<span class="t" style="left:260px;top:522px;font-size:8.500px;color:#5aa0ea;transform:none">1</span>
<span class="t" style="left:266px;top:518px;font-size:6.500px;color:#d0d0d0;transform:none">F</span>
<svg style="left:501px;top:521px" width="7" height="11" viewBox="0 0 7 11" fill="none" stroke="#e0e0e0" stroke-width="1.400"><path d="M5.500 1L1.500 5.500L5.500 10"/></svg>
<svg style="left:520px;top:521px" width="12" height="12" viewBox="0 0 12 12"><rect x="1" y="1.500" width="8" height="8" fill="#e6e6e6"/><rect x="3.800" y="4.300" width="2.400" height="2.400" fill="#2c2c2c"/><circle cx="10.500" cy="10.800" r=".700" fill="#ddd"/></svg>
<svg style="left:542px;top:521px" width="7" height="11" viewBox="0 0 7 11" fill="none" stroke="#e0e0e0" stroke-width="1.400"><path d="M1.500 1L5.500 5.500L1.500 10"/></svg>
<div class="abs" style="left:557px;top:518px;width:1px;height:18px;background:#3e3e3e"></div>
<svg style="left:564px;top:521px" width="13" height="12" viewBox="0 0 13 12"><circle cx="4" cy="5.500" r="3.300" fill="#9a9a9a"/><circle cx="7.500" cy="5.500" r="3.600" fill="#ececec"/><circle cx="12" cy="10.800" r=".700" fill="#ddd"/></svg>
<svg style="left:585px;top:521px" width="13" height="12" viewBox="0 0 13 12" fill="#e6e6e6"><rect x=".500" y="1" width="2" height="9"/><rect x="3.500" y="1" width="3" height="9"/><rect x="7.500" y="1" width="2" height="9"/><circle cx="11.500" cy="10.800" r=".700"/></svg>
<svg style="left:605px;top:521px" width="13" height="12" viewBox="0 0 13 12"><rect x="4" y="1" width="6.500" height="6.500" fill="#e6e6e6"/><rect x="1" y="4" width="6.500" height="6.500" fill="#e6e6e6" stroke="#2c2c2c" stroke-width="1"/><rect x="5.500" y="3" width="2" height="2" fill="#2c2c2c"/><circle cx="11.500" cy="10.800" r=".700" fill="#ddd"/></svg>
<svg style="left:625px;top:522px" width="12" height="10" viewBox="0 0 12 10" fill="#e6e6e6"><path d="M.500 .500H11.500V8.500H8.500V5.500H3.500V8.500H.500Z"/><rect x="2" y="2" width="8" height="1.800" fill="#2c2c2c"/></svg>
<div class="abs" style="left:641.500px;top:518px;width:1px;height:18px;background:#3e3e3e"></div>
<svg style="left:649px;top:520px" width="13" height="12" viewBox="0 0 13 12" fill="none" stroke="#e6e6e6" stroke-width="1.300"><path d="M3.500 4H1V10.500H11V5.500"/><path d="M4.500 7Q5 3.500 9 3.500" /><path d="M8 1L11 3.500L8 6" fill="#e6e6e6" stroke="none"/></svg>
<svg style="left:670px;top:522px" width="11" height="10" viewBox="0 0 11 10" fill="#e6e6e6"><path d="M7 0V10L0 5Z"/><rect x="8.300" y="0" width="2" height="10"/></svg>
<svg style="left:691px;top:521.500px" width="9" height="10" viewBox="0 0 9 10" fill="#f0f0f0"><path d="M.500 0V10L9 5Z"/></svg>
<svg style="left:710px;top:522px" width="11" height="10" viewBox="0 0 11 10" fill="#e6e6e6"><rect x=".500" y="0" width="2" height="10"/><path d="M4 0V10L11 5Z"/></svg>
<svg style="left:958px;top:522px" width="11" height="10" viewBox="0 0 11 10" fill="none" stroke="#e0e0e0" stroke-width="1.300"><path d="M2 3.500H6.500Q9.500 3.500 9.500 6H4"/><path d="M4 1L1.500 3.500L4 6" /><path d="M1.500 9H9.500"/></svg>
<div class="abs" style="left:980px;top:526.500px;width:51px;height:1px;background:#4a4a4a"></div>
<div class="abs" style="left:994px;top:523px;width:8px;height:8px;border:1.500px solid #e4e4e4;border-radius:50%;background:#2c2c2c"></div>
<svg style="left:1045px;top:523px" width="12" height="7" viewBox="0 0 12 7" fill="#e6e6e6"><path d="M0 7L4 1.500L6 4L8 0L12 7Z"/></svg>
<svg style="left:40px;top:545px" width="12" height="13" viewBox="0 0 12 13" fill="#e6e6e6"><path d="M6 .500L11.500 3.300L6 6.100L.500 3.300Z"/><path d="M1.600 5.700L6 8L10.400 5.700L11.500 6.300L6 9.100L.500 6.300Z"/><path d="M1.600 8.700L6 11L10.400 8.700L11.500 9.300L6 12.100L.500 9.300Z"/></svg>
<div class="abs" style="left:118.500px;top:550px;width:3px;height:3px;border-radius:50%;background:#f0f0f0"></div>
<div class="abs" style="left:132px;top:547px;width:5.500px;height:9px;border:1.500px solid #f0f0f0;border-radius:1px"></div>
<svg style="left:146px;top:546px" width="13" height="11" viewBox="0 0 13 11" fill="none" stroke="#e6e6e6" stroke-width="1.100"><path d="M1 5.500Q6.500 -.500 12 5.500Q6.500 11.500 1 5.500Z"/><circle cx="6.500" cy="5.500" r="1.600"/><path d="M2 .500L11 10.500" stroke-width="1.300"/></svg>
<svg style="left:165px;top:545px" width="10" height="12" viewBox="0 0 10 12"><path d="M2.800 5.500V3.500Q2.800 1 5 1Q7.200 1 7.200 3.500V5.500" fill="none" stroke="#f0f0f0" stroke-width="1.300"/><rect x="1" y="5.300" width="8" height="6" rx=".800" fill="#f0f0f0"/><rect x="4.300" y="7" width="1.400" height="2.600" fill="#2c2c2c"/></svg>
<div class="abs" style="left:35px;top:563.5px;width:153px;height:160.700px;background:#2e2e2e"></div>
<div class="abs" style="left:35px;top:563.5px;width:153px;height:17.900px;background:#2e66a6"></div>
<svg style="left:55px;top:567.5px" width="9" height="10" viewBox="0 0 9 10"><rect x=".500" y=".500" width="7.500" height="8" fill="#cfcfcf" stroke="#8a8a8a" stroke-width=".600"/><path d="M2 2.500H6.500M2 4.300H6.500M2 6H4" stroke="#6a6a6a" stroke-width=".800"/><rect x="5" y="6" width="3.500" height="3.500" fill="#ececec"/></svg>
<span class="t" style="left:67px;top:566.5px;font-size:7.500px;color:#dedede;transform:scaleX(.92)">YM_Head</span>
<div class="abs" style="left:133.500px;top:568.2px;width:4.500px;height:8.500px;background:#9a35cf;border-radius:1px"></div>
<svg style="left:55px;top:585.3px" width="9" height="10" viewBox="0 0 9 10"><rect x=".500" y=".500" width="7.500" height="8" fill="#cfcfcf" stroke="#8a8a8a" stroke-width=".600"/><path d="M2 2.500H6.500M2 4.300H6.500M2 6H4" stroke="#6a6a6a" stroke-width=".800"/><rect x="5" y="6" width="3.500" height="3.500" fill="#ececec"/></svg>
<span class="t" style="left:67px;top:584.3px;font-size:7.500px;color:#dedede;transform:scaleX(.92)">YM_Front_...</span>
<div class="abs" style="left:133.500px;top:586.1px;width:4.500px;height:8.500px;background:#ff8a1c;border-radius:1px"></div>
<div class="abs" style="left:35px;top:580.9px;width:153px;height:1px;background:#292929"></div>
<svg style="left:55px;top:603.2px" width="9" height="10" viewBox="0 0 9 10"><rect x=".500" y=".500" width="7.500" height="8" fill="#cfcfcf" stroke="#8a8a8a" stroke-width=".600"/><path d="M2 2.500H6.500M2 4.300H6.500M2 6H4" stroke="#6a6a6a" stroke-width=".800"/><rect x="5" y="6" width="3.500" height="3.500" fill="#ececec"/></svg>
<span class="t" style="left:67px;top:602.2px;font-size:7.500px;color:#dedede;transform:scaleX(.92)">YM_Middle...</span>
<div class="abs" style="left:133.500px;top:604.0px;width:4.500px;height:8.500px;background:#ff52e4;border-radius:1px"></div>
<div class="abs" style="left:35px;top:598.7px;width:153px;height:1px;background:#292929"></div>
<svg style="left:55px;top:621.0px" width="9" height="10" viewBox="0 0 9 10"><rect x=".500" y=".500" width="7.500" height="8" fill="#cfcfcf" stroke="#8a8a8a" stroke-width=".600"/><path d="M2 2.500H6.500M2 4.300H6.500M2 6H4" stroke="#6a6a6a" stroke-width=".800"/><rect x="5" y="6" width="3.500" height="3.500" fill="#ececec"/></svg>
<span class="t" style="left:67px;top:620.0px;font-size:7.500px;color:#dedede;transform:scaleX(.92)">YM_Front_...</span>
<div class="abs" style="left:133.500px;top:621.8px;width:4.500px;height:8.500px;background:#1b9c9c;border-radius:1px"></div>
<div class="abs" style="left:35px;top:616.6px;width:153px;height:1px;background:#292929"></div>
<svg style="left:55px;top:638.8px" width="9" height="10" viewBox="0 0 9 10"><rect x=".500" y=".500" width="7.500" height="8" fill="#cfcfcf" stroke="#8a8a8a" stroke-width=".600"/><path d="M2 2.500H6.500M2 4.300H6.500M2 6H4" stroke="#6a6a6a" stroke-width=".800"/><rect x="5" y="6" width="3.500" height="3.500" fill="#ececec"/></svg>
<span class="t" style="left:67px;top:637.8px;font-size:7.500px;color:#dedede;transform:scaleX(.92)">YM_Back_P...</span>
<div class="abs" style="left:133.500px;top:639.6px;width:4.500px;height:8.500px;background:#ea1a1a;border-radius:1px"></div>
<div class="abs" style="left:35px;top:634.4px;width:153px;height:1px;background:#292929"></div>
<svg style="left:55px;top:656.7px" width="9" height="10" viewBox="0 0 9 10"><rect x=".500" y=".500" width="7.500" height="8" fill="#cfcfcf" stroke="#8a8a8a" stroke-width=".600"/><path d="M2 2.500H6.500M2 4.300H6.500M2 6H4" stroke="#6a6a6a" stroke-width=".800"/><rect x="5" y="6" width="3.500" height="3.500" fill="#ececec"/></svg>
<span class="t" style="left:67px;top:655.7px;font-size:7.500px;color:#dedede;transform:scaleX(.92)">YM_Back_H...</span>
<div class="abs" style="left:133.500px;top:657.5px;width:4.500px;height:8.500px;background:#7c9c1c;border-radius:1px"></div>
<div class="abs" style="left:35px;top:652.3px;width:153px;height:1px;background:#292929"></div>
<svg style="left:55px;top:674.5px" width="9" height="10" viewBox="0 0 9 10"><rect x=".500" y=".500" width="7.500" height="8" fill="#cfcfcf" stroke="#8a8a8a" stroke-width=".600"/><path d="M2 2.500H6.500M2 4.300H6.500M2 6H4" stroke="#6a6a6a" stroke-width=".800"/><rect x="5" y="6" width="3.500" height="3.500" fill="#ececec"/></svg>
<span class="t" style="left:67px;top:673.5px;font-size:7.500px;color:#dedede;transform:scaleX(.92)">YM_Back_H...</span>
<div class="abs" style="left:133.500px;top:675.3px;width:4.500px;height:8.500px;background:#f26454;border-radius:1px"></div>
<div class="abs" style="left:35px;top:670.1px;width:153px;height:1px;background:#292929"></div>
<svg style="left:55px;top:692.4px" width="9" height="10" viewBox="0 0 9 10"><rect x=".500" y=".500" width="7.500" height="8" fill="#cfcfcf" stroke="#8a8a8a" stroke-width=".600"/><path d="M2 2.500H6.500M2 4.300H6.500M2 6H4" stroke="#6a6a6a" stroke-width=".800"/><rect x="5" y="6" width="3.500" height="3.500" fill="#ececec"/></svg>
<span class="t" style="left:67px;top:691.4px;font-size:7.500px;color:#dedede;transform:scaleX(.92)">YM_Back_Leg</span>
<div class="abs" style="left:133.500px;top:693.2px;width:4.500px;height:8.500px;background:#1ceaf2;border-radius:1px"></div>
<div class="abs" style="left:35px;top:688.0px;width:153px;height:1px;background:#292929"></div>
<svg style="left:55px;top:710.2px" width="9" height="10" viewBox="0 0 9 10"><rect x=".500" y=".500" width="7.500" height="8" fill="#cfcfcf" stroke="#8a8a8a" stroke-width=".600"/><path d="M2 2.500H6.500M2 4.300H6.500M2 6H4" stroke="#6a6a6a" stroke-width=".800"/><rect x="5" y="6" width="3.500" height="3.500" fill="#ececec"/></svg>
<span class="t" style="left:67px;top:709.2px;font-size:7.500px;color:#dedede;transform:scaleX(.92)">Shadow</span>
<div class="abs" style="left:133.500px;top:711.0px;width:4.500px;height:8.500px;background:#9a35cf;border-radius:1px"></div>
<div class="abs" style="left:35px;top:705.8px;width:153px;height:1px;background:#292929"></div>
<svg style="left:165px;top:708.8px" width="10" height="12" viewBox="0 0 10 12"><path d="M2.800 5.500V3.500Q2.800 1 5 1Q7.200 1 7.200 3.500V5.500" fill="none" stroke="#e0e0e0" stroke-width="1.300"/><rect x="1" y="5.300" width="8" height="6" rx=".800" fill="#e0e0e0"/><rect x="4.300" y="7" width="1.400" height="2.600" fill="#2c2c2c"/></svg>
<div class="abs" style="left:188px;top:540px;width:872px;height:11px;background:#2f2f2f"></div>
<div class="abs" style="left:188px;top:551px;width:872px;height:12.500px;background:#343434"></div>
<div class="abs" style="left:219.8px;top:541px;width:1px;height:10px;background:#3b3b3b"></div>
<span class="t" style="left:220.6px;top:551.500px;font-size:7px;color:#8e8e8e;transform:scaleX(.9)">5</span>
<div class="abs" style="left:260.6px;top:541px;width:1px;height:10px;background:#3b3b3b"></div>
<span class="t" style="left:259.4px;top:551.500px;font-size:7px;color:#8e8e8e;transform:scaleX(.9)">10</span>
<div class="abs" style="left:301.3px;top:541px;width:1px;height:10px;background:#3b3b3b"></div>
<span class="t" style="left:300.1px;top:551.500px;font-size:7px;color:#8e8e8e;transform:scaleX(.9)">15</span>
<div class="abs" style="left:342.1px;top:541px;width:1px;height:10px;background:#3b3b3b"></div>
<span class="t" style="left:340.9px;top:551.500px;font-size:7px;color:#8e8e8e;transform:scaleX(.9)">20</span>
<div class="abs" style="left:382.8px;top:541px;width:1px;height:10px;background:#3b3b3b"></div>
<span class="t" style="left:381.6px;top:551.500px;font-size:7px;color:#8e8e8e;transform:scaleX(.9)">25</span>
<div class="abs" style="left:423.6px;top:541px;width:1px;height:10px;background:#3b3b3b"></div>
<span class="t" style="left:422.4px;top:551.500px;font-size:7px;color:#8e8e8e;transform:scaleX(.9)">30</span>
<div class="abs" style="left:464.3px;top:541px;width:1px;height:10px;background:#3b3b3b"></div>
<span class="t" style="left:463.1px;top:551.500px;font-size:7px;color:#8e8e8e;transform:scaleX(.9)">35</span>
<div class="abs" style="left:505.1px;top:541px;width:1px;height:10px;background:#3b3b3b"></div>
<span class="t" style="left:503.9px;top:551.500px;font-size:7px;color:#8e8e8e;transform:scaleX(.9)">40</span>
<div class="abs" style="left:545.8px;top:541px;width:1px;height:10px;background:#3b3b3b"></div>
<span class="t" style="left:544.6px;top:551.500px;font-size:7px;color:#8e8e8e;transform:scaleX(.9)">45</span>
<div class="abs" style="left:586.6px;top:541px;width:1px;height:10px;background:#3b3b3b"></div>
<span class="t" style="left:585.4px;top:551.500px;font-size:7px;color:#8e8e8e;transform:scaleX(.9)">50</span>
<div class="abs" style="left:627.3px;top:541px;width:1px;height:10px;background:#3b3b3b"></div>
<span class="t" style="left:626.1px;top:551.500px;font-size:7px;color:#8e8e8e;transform:scaleX(.9)">55</span>
<div class="abs" style="left:668.1px;top:541px;width:1px;height:10px;background:#3b3b3b"></div>
<span class="t" style="left:666.9px;top:551.500px;font-size:7px;color:#8e8e8e;transform:scaleX(.9)">60</span>
<div class="abs" style="left:708.8px;top:541px;width:1px;height:10px;background:#3b3b3b"></div>
<span class="t" style="left:707.6px;top:551.500px;font-size:7px;color:#8e8e8e;transform:scaleX(.9)">65</span>
<div class="abs" style="left:749.6px;top:541px;width:1px;height:10px;background:#3b3b3b"></div>
<span class="t" style="left:748.4px;top:551.500px;font-size:7px;color:#8e8e8e;transform:scaleX(.9)">70</span>
<div class="abs" style="left:790.3px;top:541px;width:1px;height:10px;background:#3b3b3b"></div>
<span class="t" style="left:789.1px;top:551.500px;font-size:7px;color:#8e8e8e;transform:scaleX(.9)">75</span>
<div class="abs" style="left:831.1px;top:541px;width:1px;height:10px;background:#3b3b3b"></div>
<span class="t" style="left:829.9px;top:551.500px;font-size:7px;color:#8e8e8e;transform:scaleX(.9)">80</span>
<div class="abs" style="left:871.8px;top:541px;width:1px;height:10px;background:#3b3b3b"></div>
<span class="t" style="left:870.6px;top:551.500px;font-size:7px;color:#8e8e8e;transform:scaleX(.9)">85</span>
<div class="abs" style="left:912.6px;top:541px;width:1px;height:10px;background:#3b3b3b"></div>
<span class="t" style="left:911.4px;top:551.500px;font-size:7px;color:#8e8e8e;transform:scaleX(.9)">90</span>
<div class="abs" style="left:953.3px;top:541px;width:1px;height:10px;background:#3b3b3b"></div>
<span class="t" style="left:952.1px;top:551.500px;font-size:7px;color:#8e8e8e;transform:scaleX(.9)">95</span>
<div class="abs" style="left:994.1px;top:541px;width:1px;height:10px;background:#3b3b3b"></div>
<span class="t" style="left:990.9px;top:551.500px;font-size:7px;color:#8e8e8e;transform:scaleX(.9)">100</span>
<div class="abs" style="left:1034.8px;top:541px;width:1px;height:10px;background:#3b3b3b"></div>
<span class="t" style="left:1031.6px;top:551.500px;font-size:7px;color:#8e8e8e;transform:scaleX(.9)">105</span>
<span class="t" style="left:424px;top:540px;font-size:7px;font-style:italic;color:#8e8e8e;transform:scaleX(.9)">1s</span>
<span class="t" style="left:668px;top:540px;font-size:7px;font-style:italic;color:#8e8e8e;transform:scaleX(.9)">2s</span>
<span class="t" style="left:912px;top:540px;font-size:7px;font-style:italic;color:#8e8e8e;transform:scaleX(.9)">3s</span>
<div class="abs" style="left:188px;top:563.5px;width:871.500px;height:143px;background:#6e94bf"></div>
<div class="abs" style="left:188px;top:706.300px;width:871.500px;height:17.900px;background:#9c9c9c"></div>
<div class="abs" style="left:188px;top:580.5px;width:871.500px;height:1.200px;background:#32517a"></div>
<div class="abs" style="left:188px;top:598.3px;width:871.500px;height:1.200px;background:#32517a"></div>
<div class="abs" style="left:188px;top:616.2px;width:871.500px;height:1.200px;background:#32517a"></div>
<div class="abs" style="left:188px;top:634.0px;width:871.500px;height:1.200px;background:#32517a"></div>
<div class="abs" style="left:188px;top:651.9px;width:871.500px;height:1.200px;background:#32517a"></div>
<div class="abs" style="left:188px;top:669.7px;width:871.500px;height:1.200px;background:#32517a"></div>
<div class="abs" style="left:188px;top:687.6px;width:871.500px;height:1.200px;background:#32517a"></div>
<div class="abs" style="left:188px;top:705.4px;width:871.500px;height:1.200px;background:#32517a"></div>
<div class="abs" style="left:189.500px;top:574.9px;width:3.400px;height:3.400px;border:1px solid #1f4f8c;border-radius:50%"></div>
<div class="abs" style="left:189.500px;top:592.7px;width:3.400px;height:3.400px;border:1px solid #1f4f8c;border-radius:50%"></div>
<div class="abs" style="left:189.500px;top:610.6px;width:3.400px;height:3.400px;border:1px solid #1f4f8c;border-radius:50%"></div>
<div class="abs" style="left:189.500px;top:628.4px;width:3.400px;height:3.400px;border:1px solid #1f4f8c;border-radius:50%"></div>
<div class="abs" style="left:189.500px;top:646.3px;width:3.400px;height:3.400px;border:1px solid #1f4f8c;border-radius:50%"></div>
<div class="abs" style="left:189.500px;top:664.1px;width:3.400px;height:3.400px;border:1px solid #1f4f8c;border-radius:50%"></div>
<div class="abs" style="left:189.500px;top:682.0px;width:3.400px;height:3.400px;border:1px solid #1f4f8c;border-radius:50%"></div>
<div class="abs" style="left:189.500px;top:699.8px;width:3.400px;height:3.400px;border:1px solid #1f4f8c;border-radius:50%"></div>
<div class="abs" style="left:189.500px;top:717.7px;width:3.400px;height:3.400px;border:1px solid #222;border-radius:50%"></div>
<div class="abs" style="left:188px;top:540px;width:7.500px;height:22.500px;background:#3f81d8;border-radius:1px"></div>
<div class="abs" style="left:191px;top:562px;width:1px;height:169px;background:#3f81d8;opacity:.7"></div>
<div class="abs" style="left:1059.500px;top:563.5px;width:5.500px;height:161px;background:#313131"></div>
<div class="abs" style="left:35px;top:724.200px;width:1030px;height:7px;background:#2b2b2b"></div>
<!--/TIMELINE-->
<!--PROPS--><div class="abs" style="left:1110px;top:36px;width:163px;height:13px;background:#2a2a2a"></div>
<span class="t" style="left:1071px;top:36.500px;font-weight:bold;font-size:7.500px;color:#f4f4f4;transform:scaleX(.9)">Properties</span>
<span class="t" style="left:1114px;top:36.500px;font-size:7.500px;color:#6a6a6a;transform:scaleX(.9)">Library</span>
<span class="t" style="left:1147px;top:36.500px;font-size:7.500px;color:#6a6a6a;transform:scaleX(.9)">Assets</span>
<svg style="left:1262px;top:40px" width="7" height="6" viewBox="0 0 7 6" fill="#7a7a7a"><rect width="7" height="1.300"/><rect y="2.300" width="7" height="1.300"/><rect y="4.600" width="7" height="1.300"/></svg>
<div class="abs" style="left:1067px;top:81px;width:206px;height:2px;background:#262626"></div>
<div class="abs" style="left:1067px;top:129px;width:206px;height:2px;background:#262626"></div>
<div class="abs" style="left:1067px;top:159px;width:206px;height:2px;background:#262626"></div>
<div class="abs" style="left:1067px;top:220px;width:206px;height:2px;background:#262626"></div>
<div class="abs" style="left:1067px;top:268px;width:206px;height:2px;background:#262626"></div>
<div class="abs" style="left:1067px;top:372px;width:206px;height:2px;background:#262626"></div>
<span class="t p" style="left:1103.500px;top:62px;color:#5e5e5e">Tool</span>
<div class="abs" style="left:1128.500px;top:57.500px;width:41.500px;height:20px;background:#4b4b4b;border:1px solid #5c5c5c;border-radius:2px"></div>
<span class="t p" style="left:1138px;top:62px;color:#fafafa">Object</span>
<span class="t p" style="left:1178.500px;top:62px;color:#f0f0f0">Frame</span>
<div class="abs" style="left:1210px;top:58px;width:1px;height:18px;background:#454545"></div>
<span class="t p" style="left:1221.500px;top:62px;color:#f0f0f0">Doc</span>
<svg style="left:1080px;top:88px" width="13" height="13" viewBox="0 0 13 13" fill="none" stroke="#e0e0e0" stroke-width="1"><path d="M1 8.500L6.500 1.500L9 4.500"/><path d="M3.500 6.500L8 11"/><circle cx="4" cy="9" r="2.400"/><rect x="6.500" y="5.500" width="5.500" height="5.500" fill="#e0e0e0" stroke="none"/></svg>
<div class="abs" style="left:1107px;top:86.500px;width:152.500px;height:16px;background:#1f1f1f;border:1px solid #5a5a5a;border-radius:2.500px"></div>
<span class="t p" style="left:1113px;top:89px;color:#e6e6e6">Graphic</span>
<svg style="left:1245px;top:91.500px" width="9" height="7" viewBox="0 0 9 7" fill="none" stroke="#f0f0f0" stroke-width="1.500"><path d="M1 1.500L4.500 5L8 1.500"/></svg>
<span class="t p" style="left:1081px;top:108.500px;color:#e0e0e0">Instance of:</span>
<span class="t p" style="left:1128px;top:108.500px;color:#8a8a8a;font-size:7px">---</span>
<div class="abs" style="left:1220px;top:106.500px;width:16.500px;height:16.500px;background:#262626;border:1px solid #555;border-radius:2.500px"></div>
<svg style="left:1223px;top:109.500px" width="11" height="11" viewBox="0 0 11 11" fill="none" stroke="#e0e0e0" stroke-width=".900"><path d="M0 2H11M0 5.500H11M0 9H11"/><circle cx="3.500" cy="2" r="1.300" fill="#262626"/><circle cx="7.500" cy="5.500" r="1.300" fill="#262626"/><circle cx="4.500" cy="9" r="1.300" fill="#262626"/></svg>
<div class="abs" style="left:1243px;top:106.500px;width:16.500px;height:16.500px;background:#262626;border:1px solid #555;border-radius:2.500px"></div>
<svg style="left:1246px;top:109.500px" width="11" height="11" viewBox="0 0 11 11" fill="none" stroke="#f0f0f0" stroke-width="1.300"><path d="M1 3H9.500M7 .800L9.700 3L7 5.200"/><path d="M10 8H1.500M4 5.800L1.300 8L4 10.200"/></svg>
<div class="abs" style="left:1080.500px;top:136.500px;width:16.500px;height:16.500px;background:#262626;border:1px solid #555;border-radius:2.500px"></div>
<svg style="left:1083.500px;top:139.500px" width="11" height="11" viewBox="0 0 11 11" fill="#cfcfcf"><rect x="0" y="0" width="4" height="4"/><rect x="5.500" y="2.500" width="4" height="4" fill="#a8a8a8"/><rect x="1" y="6" width="4" height="4.500"/></svg>
<div class="abs" style="left:1104.500px;top:137px;width:1px;height:16px;background:#444"></div>
<div class="abs" style="left:1114.500px;top:136.500px;width:16.500px;height:16.500px;background:#262626;border:1px solid #555;border-radius:2.500px"></div>
<svg style="left:1116.500px;top:139px" width="13" height="12" viewBox="0 0 13 12" fill="#f0f0f0"><circle cx="8" cy="3" r="2.300"/><circle cx="5.800" cy="6.500" r="2.300"/><circle cx="10.200" cy="6.500" r="2.300"/><path d="M7.300 7H8.700L9.500 11H6.500Z"/><path d="M0 6H3M1.800 4.500L3.300 6L1.800 7.500" fill="none" stroke="#f0f0f0" stroke-width="1"/></svg>
<svg style="left:1079.500px;top:168.5px" width="8" height="6" viewBox="0 0 8 6" fill="none" stroke="#ececec" stroke-width="1.400"><path d="M1 1L4 4.300L7 1"/></svg>
<span class="t" style="left:1094.500px;top:165.0px;font-weight:bold;font-size:8.500px;color:#ececec;transform:scaleX(.86)">Position and Size</span>
<svg style="left:1079.500px;top:230.0px" width="8" height="6" viewBox="0 0 8 6" fill="none" stroke="#ececec" stroke-width="1.400"><path d="M1 1L4 4.300L7 1"/></svg>
<span class="t" style="left:1094.500px;top:226.5px;font-weight:bold;font-size:8.500px;color:#ececec;transform:scaleX(.86)">Color Effects</span>
<svg style="left:1079.500px;top:277.5px" width="8" height="6" viewBox="0 0 8 6" fill="none" stroke="#ececec" stroke-width="1.400"><path d="M1 1L4 4.300L7 1"/></svg>
<span class="t" style="left:1094.500px;top:274.0px;font-weight:bold;font-size:8.500px;color:#ececec;transform:scaleX(.86)">Looping</span>
<span class="t p" style="left:1081px;top:185.4px;color:#e0e0e0;font-size:9px">W</span>
<span class="t p" style="left:1081px;top:202.0px;color:#e0e0e0;font-size:9px">H</span>
<span class="t p" style="left:1154px;top:185.4px;color:#e0e0e0;font-size:9px">X</span>
<span class="t p" style="left:1154px;top:202.0px;color:#e0e0e0;font-size:9px">Y</span>
<span class="t p" style="left:1105.0px;top:185.4px;color:#5a9be0;font-size:9px;transform:scaleX(.82)">663</span>
<span class="t p" style="left:1105.0px;top:202.0px;color:#5a9be0;font-size:9px;transform:scaleX(.82)">2444.1</span>
<span class="t p" style="left:1175.5px;top:185.4px;color:#5a9be0;font-size:9px;transform:scaleX(.82)">0</span>
<span class="t p" style="left:1175.5px;top:202.0px;color:#5a9be0;font-size:9px;transform:scaleX(.82)">28.1</span>
<svg style="left:1135px;top:187px" width="14" height="26" viewBox="0 0 14 26" fill="none" stroke="#bdbdbd" stroke-width="1"><path d="M1 2H8.500V7M1 23H8.500V18.500"/><path d="M6.500 10.500V8.800Q6.500 7 8.500 7Q10.500 7 10.500 8.500" stroke="#e6e6e6" stroke-width="1.100"/><rect x="5" y="10.500" width="7" height="6" fill="#ececec" stroke="none"/><rect x="7.800" y="12.300" width="1.400" height="2.400" fill="#323232" stroke="none"/></svg>
<div class="abs" style="left:1080.500px;top:245px;width:179px;height:16.500px;background:#1f1f1f;border:1px solid #5a5a5a;border-radius:2.500px"></div>
<span class="t p" style="left:1087.500px;top:248px;color:#e6e6e6">None</span>
<svg style="left:1245px;top:250px" width="9" height="7" viewBox="0 0 9 7" fill="none" stroke="#f0f0f0" stroke-width="1.500"><path d="M1 1.500L4.500 5L8 1.500"/></svg>
<div class="abs" style="left:1080px;top:292px;width:84.500px;height:17px;background:#2a2a2a;border:1px solid #4c4c4c;border-radius:2.500px"></div>
<div class="abs" style="left:1080.500px;top:292.500px;width:16.500px;height:16px;background:#4e4e4e;border-radius:2px"></div>
<div class="abs" style="left:1097.5px;top:293px;width:1px;height:15px;background:#4c4c4c"></div>
<div class="abs" style="left:1114.0px;top:293px;width:1px;height:15px;background:#4c4c4c"></div>
<div class="abs" style="left:1131.0px;top:293px;width:1px;height:15px;background:#4c4c4c"></div>
<div class="abs" style="left:1147.5px;top:293px;width:1px;height:15px;background:#4c4c4c"></div>
<svg style="left:1083px;top:295px" width="12" height="11" viewBox="0 0 12 11" fill="none" stroke="#f0f0f0" stroke-width="1.500"><path d="M3.500 4H1.200V9.800H10.300V6"/><path d="M4.200 7Q4.500 3.200 8 3.200" stroke-width="1.300"/><path d="M7 .500L10.500 3.200L7 5.900Z" fill="#f0f0f0" stroke="none"/></svg>
<svg style="left:1100px;top:295px" width="13" height="12" viewBox="0 0 13 12"><path d="M1.500 .500V9L4 7L7 6Z" fill="#f0f0f0"/><circle cx="8.800" cy="8" r="3.300" fill="#f0f0f0" stroke="#2a2a2a" stroke-width=".900"/><path d="M8.200 6.800L9 6.200V9.800" fill="none" stroke="#2a2a2a" stroke-width=".900"/></svg>
<svg style="left:1116.500px;top:296px" width="13" height="10" viewBox="0 0 13 10" fill="#f0f0f0"><rect x="4" y="0" width="5" height="10"/><rect x="5.300" y="1.500" width="1.500" height="7" fill="#2a2a2a"/><path d="M0 3L2.800 5L0 7ZM13 3L10.200 5L13 7Z"/></svg>
<svg style="left:1133px;top:295px" width="13" height="12" viewBox="0 0 13 12"><path d="M7.500 .500V7L4.500 6.500L1 4.500Z" fill="#f0f0f0"/><circle cx="8.800" cy="8" r="3.300" fill="#f0f0f0" stroke="#2a2a2a" stroke-width=".900"/><path d="M8.200 6.800L9 6.200V9.800" fill="none" stroke="#2a2a2a" stroke-width=".900"/></svg>
<svg style="left:1150px;top:295px" width="12" height="11" viewBox="0 0 12 11" fill="none" stroke="#f0f0f0" stroke-width="1.500"><path d="M8.500 4H10.800V9.800H1.700V6"/><path d="M7.800 7Q7.500 3.200 4 3.200" stroke-width="1.300"/><path d="M5 .500L1.500 3.200L5 5.900Z" fill="#f0f0f0" stroke="none"/></svg>
<div class="abs" style="left:1080px;top:312px;width:59.500px;height:17.500px;background:#262626;border:1px solid #555;border-radius:2.500px"></div>
<span class="t p" style="left:1087px;top:315px;color:#ececec">Frame picker</span>
<span class="t p" style="left:1208.500px;top:315px;color:#e0e0e0">First</span>
<span class="t p" style="left:1232.500px;top:315px;color:#4a7cc0">1</span>
<span class="t p" style="left:1209px;top:334px;color:#e0e0e0">Last</span>
<span class="t p" style="left:1233px;top:334px;color:#6a6a6a">-</span>
<div class="abs" style="left:1080px;top:350.500px;width:179.500px;height:16.500px;border:1px solid #474747;border-radius:2.500px"></div>
<span class="t p" style="left:1150px;top:353px;color:#666">Lip Syncing</span>
<!--/PROPS-->
<!--STRIP--><div class="abs" style="left:1275px;top:65.5px;width:25px;height:1.500px;background:#2a2a2a"></div>
<div class="abs" style="left:1275px;top:95.0px;width:25px;height:1.500px;background:#2a2a2a"></div>
<div class="abs" style="left:1275px;top:124.5px;width:25px;height:1.500px;background:#2a2a2a"></div>
<div class="abs" style="left:1275px;top:154.0px;width:25px;height:1.500px;background:#2a2a2a"></div>
<div class="abs" style="left:1275px;top:183.5px;width:25px;height:1.500px;background:#2a2a2a"></div>
<div class="abs" style="left:1275px;top:213.0px;width:25px;height:1.500px;background:#2a2a2a"></div>
<div class="abs" style="left:1275px;top:242.5px;width:25px;height:1.500px;background:#2a2a2a"></div>
<div class="abs" style="left:1275px;top:272.0px;width:25px;height:1.500px;background:#2a2a2a"></div>
<div class="abs" style="left:1280px;top:40.0px;width:14px;height:1.500px;background:#3c3c3c"></div>
<div class="abs" style="left:1280px;top:69.5px;width:14px;height:1.500px;background:#3c3c3c"></div>
<div class="abs" style="left:1280px;top:99.0px;width:14px;height:1.500px;background:#3c3c3c"></div>
<div class="abs" style="left:1280px;top:128.5px;width:14px;height:1.500px;background:#3c3c3c"></div>
<div class="abs" style="left:1280px;top:158.0px;width:14px;height:1.500px;background:#3c3c3c"></div>
<div class="abs" style="left:1280px;top:187.5px;width:14px;height:1.500px;background:#3c3c3c"></div>
<div class="abs" style="left:1280px;top:217.0px;width:14px;height:1.500px;background:#3c3c3c"></div>
<div class="abs" style="left:1280px;top:246.5px;width:14px;height:1.500px;background:#3c3c3c"></div>
<div class="abs" style="left:1280px;top:276.0px;width:14px;height:1.500px;background:#3c3c3c"></div>
<svg style="left:1280px;top:46px" width="15" height="13" viewBox="0 0 15 13"><path d="M7.500 .800Q14 .800 14 6Q14 8.500 11 8.300Q9 8 9 9.800Q9.300 12.200 6.500 12.200Q1 12 1 7Q1 .800 7.500 .800Z" fill="#e8e8e8"/><circle cx="4" cy="6.500" r="1.100" fill="#323232"/><circle cx="6" cy="3.800" r="1.100" fill="#323232"/><circle cx="9.300" cy="3.500" r="1.100" fill="#323232"/><circle cx="11.500" cy="5.800" r="1.100" fill="#323232"/><circle cx="5.500" cy="9.600" r="1.300" fill="#323232"/></svg>
<svg style="left:1281px;top:77px" width="13" height="10" viewBox="0 0 13 10"><rect x=".500" y=".500" width="12" height="9" fill="#cfcfcf"/><rect x="1.500" y="1.500" width="4.500" height="3" fill="#f2f2f2"/><rect x="7" y="1.500" width="2" height="2" fill="#8a8a8a"/><rect x="9.800" y="1.500" width="2" height="2" fill="#a8a8a8"/><path d="M1.500 6.500H11.500" stroke="#9a9a9a" stroke-width="1.200" stroke-dasharray="1.500 1"/></svg>
<svg style="left:1281px;top:106px" width="13" height="13" viewBox="0 0 13 13" fill="#e8e8e8"><rect x="2" y="2" width="9" height="9" fill="none" stroke="#e8e8e8" stroke-width="1"/><rect x="0" y="0" width="3.200" height="3.200"/><rect x="9.800" y="0" width="3.200" height="3.200"/><rect x="0" y="9.800" width="3.200" height="3.200"/><rect x="9.800" y="9.800" width="3.200" height="3.200"/><rect x="5" y=".500" width="3" height="2.400"/><rect x="5" y="10.100" width="3" height="2.400"/><rect x=".500" y="5" width="2.400" height="3"/><rect x="10.100" y="5" width="2.400" height="3"/><circle cx="6.500" cy="6.500" r=".700"/></svg>
<svg style="left:1281px;top:135px" width="13" height="14" viewBox="0 0 13 14" fill="#e8e8e8"><rect x="0" y="0" width="1.400" height="14"/><rect x="2.500" y="2.500" width="5.500" height="3.800"/><rect x="2.500" y="8" width="10" height="3.800"/></svg>
<svg style="left:1281px;top:164px" width="13" height="13" viewBox="0 0 13 13"><circle cx="6.500" cy="6.500" r="6.200" fill="#f0f0f0"/><rect x="5.600" y="5.300" width="1.900" height="4.800" fill="#323232"/><rect x="4.800" y="5.300" width="2" height="1" fill="#323232"/><rect x="4.800" y="9.300" width="3.600" height="1" fill="#323232"/><circle cx="6.500" cy="3.300" r="1.100" fill="#323232"/></svg>
<svg style="left:1280px;top:193px" width="14" height="14" viewBox="0 0 14 14" fill="#e8e8e8"><circle cx="3.300" cy="10.800" r="2.900"/><circle cx="8.800" cy="6.600" r="2.100"/><circle cx="11.800" cy="2" r="1.300"/></svg>
<svg style="left:1281px;top:223px" width="13" height="15" viewBox="0 0 13 15" fill="#e8e8e8"><path d="M2.500 9H10.500L10 14.500H3Z"/><path d="M6 0L7.500 3V9H5V3Z"/><path d="M1 3.500L3 5.500L4.300 9H2.800L0.800 5.500Z"/><path d="M10 2.500Q12.500 2.500 12.500 4.500L10.200 5.200L9.500 9H8.300L9 4.500Z"/></svg>
<svg style="left:1281px;top:252px" width="13" height="14" viewBox="0 0 13 14" fill="none" stroke="#e8e8e8" stroke-width="1.300"><path d="M1.500 0V12.500H13"/><path d="M4.500 10L9.500 5.500"/><path d="M6.800 4.800H10.500V8.500Z" fill="#e8e8e8" stroke="none"/></svg>
<svg style="left:1280.500px;top:283px" width="14" height="14" viewBox="0 0 14 14" fill="none" stroke="#e8e8e8" stroke-width="1"><rect x="0.5" y="0.5" width="3.400" height="5"/><rect x="5.2" y="0.5" width="3.400" height="5"/><rect x="9.9" y="0.5" width="3.400" height="5"/><rect x="0.5" y="8.0" width="3.400" height="5"/><rect x="5.2" y="8.0" width="3.400" height="5"/><rect x="9.9" y="8.0" width="3.400" height="5"/><path d="M1 3.500H3.500M5.700 3.500H8.200M10.400 3.500H12.900M5.700 11H8.200M10.400 11H12.900" stroke-width="1.600"/><path d="M1 10.500L2.300 12L6 8" stroke-width="1.100"/></svg>
<div class="abs" style="left:1059.500px;top:63px;width:5.700px;height:437px;background:#4f4f4f"></div>
<div class="abs" style="left:1059.500px;top:161px;width:5.700px;height:238.200px;background:#d4d4d4"></div>
<div class="abs" style="left:35px;top:494px;width:1024.500px;height:6px;background:#5a5a5a"></div>
<div class="abs" style="left:45.700px;top:494px;width:1013.800px;height:6px;background:#d8d8d8"></div>
<!--/STRIP-->
<!--WM--><svg id="wm" style="left:0;top:0;pointer-events:none" width="1300" height="731" viewBox="0 0 1300 731"><filter id="wmb"><feGaussianBlur stdDeviation=".8"/></filter><g filter="url(#wmb)">
<g transform="translate(520.0 27.0) rotate(-42) scale(0.57) translate(-67 -85)" opacity="0.08" fill="#000"><path fill-rule="evenodd" d="M50 45.500H86Q104 45.500 104 63.500V92H108Q112.500 92 112.500 96.500V104.500Q112.500 109 108 109H104V120Q104 124.500 99.500 124.500H86Q81.500 124.500 81.500 120V109H53.500V120Q53.500 124.500 49 124.500H36.500Q32 124.500 32 120V109H26.500Q22 109 22 104.500V96.500Q22 92 26.500 92H32V63.500Q32 45.500 50 45.500ZM57 62.800Q53.300 62.800 53.300 66.500V85.500Q53.300 89.200 57 89.200H77Q80.800 89.200 80.800 85.500V66.500Q80.800 62.800 77 62.800Z"/><text x="116.500" y="110" font-family="Liberation Sans, sans-serif" font-weight="bold" font-size="54" textLength="99" lengthAdjust="spacingAndGlyphs" stroke="#000" stroke-width="3" stroke-linejoin="round">yug</text><path transform="translate(121 27) rotate(38)" d="M-7 -9H7L8.500 -5H8.500Q8 5 0 15Q-8 5 -8.500 -5Z"/></g>
<g transform="translate(723.0 50.0) rotate(-42) scale(0.57) translate(-67 -85)" opacity="0.08" fill="#000"><path fill-rule="evenodd" d="M50 45.500H86Q104 45.500 104 63.500V92H108Q112.500 92 112.500 96.500V104.500Q112.500 109 108 109H104V120Q104 124.500 99.500 124.500H86Q81.500 124.500 81.500 120V109H53.500V120Q53.500 124.500 49 124.500H36.500Q32 124.500 32 120V109H26.500Q22 109 22 104.500V96.500Q22 92 26.500 92H32V63.500Q32 45.500 50 45.500ZM57 62.800Q53.300 62.800 53.300 66.500V85.500Q53.300 89.200 57 89.200H77Q80.800 89.200 80.800 85.500V66.500Q80.800 62.800 77 62.800Z"/><text x="116.500" y="110" font-family="Liberation Sans, sans-serif" font-weight="bold" font-size="54" textLength="99" lengthAdjust="spacingAndGlyphs" stroke="#000" stroke-width="3" stroke-linejoin="round">yug</text><path transform="translate(121 27) rotate(38)" d="M-7 -9H7L8.500 -5H8.500Q8 5 0 15Q-8 5 -8.500 -5Z"/></g>
<g transform="translate(920.0 60.0) rotate(-42) scale(0.57) translate(-67 -85)" opacity="0.08" fill="#000"><path fill-rule="evenodd" d="M50 45.500H86Q104 45.500 104 63.500V92H108Q112.500 92 112.500 96.500V104.500Q112.500 109 108 109H104V120Q104 124.500 99.500 124.500H86Q81.500 124.500 81.500 120V109H53.500V120Q53.500 124.500 49 124.500H36.500Q32 124.500 32 120V109H26.500Q22 109 22 104.500V96.500Q22 92 26.500 92H32V63.500Q32 45.500 50 45.500ZM57 62.800Q53.300 62.800 53.300 66.500V85.500Q53.300 89.200 57 89.200H77Q80.800 89.200 80.800 85.500V66.500Q80.800 62.800 77 62.800Z"/><text x="116.500" y="110" font-family="Liberation Sans, sans-serif" font-weight="bold" font-size="54" textLength="99" lengthAdjust="spacingAndGlyphs" stroke="#000" stroke-width="3" stroke-linejoin="round">yug</text><path transform="translate(121 27) rotate(38)" d="M-7 -9H7L8.500 -5H8.500Q8 5 0 15Q-8 5 -8.500 -5Z"/></g>
<g transform="translate(1120.0 70.0) rotate(-42) scale(0.57) translate(-67 -85)" opacity="0.08" fill="#000"><path fill-rule="evenodd" d="M50 45.500H86Q104 45.500 104 63.500V92H108Q112.500 92 112.500 96.500V104.500Q112.500 109 108 109H104V120Q104 124.500 99.500 124.500H86Q81.500 124.500 81.500 120V109H53.500V120Q53.500 124.500 49 124.500H36.500Q32 124.500 32 120V109H26.500Q22 109 22 104.500V96.500Q22 92 26.500 92H32V63.500Q32 45.500 50 45.500ZM57 62.800Q53.300 62.800 53.300 66.500V85.500Q53.300 89.200 57 89.200H77Q80.800 89.200 80.800 85.500V66.500Q80.800 62.800 77 62.800Z"/><text x="116.500" y="110" font-family="Liberation Sans, sans-serif" font-weight="bold" font-size="54" textLength="99" lengthAdjust="spacingAndGlyphs" stroke="#000" stroke-width="3" stroke-linejoin="round">yug</text><path transform="translate(121 27) rotate(38)" d="M-7 -9H7L8.500 -5H8.500Q8 5 0 15Q-8 5 -8.500 -5Z"/></g>
<g transform="translate(137.0 210.0) rotate(-42) scale(0.57) translate(-67 -85)" opacity="0.08" fill="#000"><path fill-rule="evenodd" d="M50 45.500H86Q104 45.500 104 63.500V92H108Q112.500 92 112.500 96.500V104.500Q112.500 109 108 109H104V120Q104 124.500 99.500 124.500H86Q81.500 124.500 81.500 120V109H53.500V120Q53.500 124.500 49 124.500H36.500Q32 124.500 32 120V109H26.500Q22 109 22 104.500V96.500Q22 92 26.500 92H32V63.500Q32 45.500 50 45.500ZM57 62.800Q53.300 62.800 53.300 66.500V85.500Q53.300 89.200 57 89.200H77Q80.800 89.200 80.800 85.500V66.500Q80.800 62.800 77 62.800Z"/><text x="116.500" y="110" font-family="Liberation Sans, sans-serif" font-weight="bold" font-size="54" textLength="99" lengthAdjust="spacingAndGlyphs" stroke="#000" stroke-width="3" stroke-linejoin="round">yug</text><path transform="translate(121 27) rotate(38)" d="M-7 -9H7L8.500 -5H8.500Q8 5 0 15Q-8 5 -8.500 -5Z"/></g>
<g transform="translate(337.0 223.0) rotate(-42) scale(0.57) translate(-67 -85)" opacity="0.09" fill="#000"><path fill-rule="evenodd" d="M50 45.500H86Q104 45.500 104 63.500V92H108Q112.500 92 112.500 96.500V104.500Q112.500 109 108 109H104V120Q104 124.500 99.500 124.500H86Q81.500 124.500 81.500 120V109H53.500V120Q53.500 124.500 49 124.500H36.500Q32 124.500 32 120V109H26.500Q22 109 22 104.500V96.500Q22 92 26.500 92H32V63.500Q32 45.500 50 45.500ZM57 62.800Q53.300 62.800 53.300 66.500V85.500Q53.300 89.200 57 89.200H77Q80.800 89.200 80.800 85.500V66.500Q80.800 62.800 77 62.800Z"/><text x="116.500" y="110" font-family="Liberation Sans, sans-serif" font-weight="bold" font-size="54" textLength="99" lengthAdjust="spacingAndGlyphs" stroke="#000" stroke-width="3" stroke-linejoin="round">yug</text><path transform="translate(121 27) rotate(38)" d="M-7 -9H7L8.500 -5H8.500Q8 5 0 15Q-8 5 -8.500 -5Z"/></g>
<g transform="translate(537.0 231.0) rotate(-42) scale(0.57) translate(-67 -85)" opacity="0.09" fill="#000"><path fill-rule="evenodd" d="M50 45.500H86Q104 45.500 104 63.500V92H108Q112.500 92 112.500 96.500V104.500Q112.500 109 108 109H104V120Q104 124.500 99.500 124.500H86Q81.500 124.500 81.500 120V109H53.500V120Q53.500 124.500 49 124.500H36.500Q32 124.500 32 120V109H26.500Q22 109 22 104.500V96.500Q22 92 26.500 92H32V63.500Q32 45.500 50 45.500ZM57 62.800Q53.300 62.800 53.300 66.500V85.500Q53.300 89.200 57 89.200H77Q80.800 89.200 80.800 85.500V66.500Q80.800 62.800 77 62.800Z"/><text x="116.500" y="110" font-family="Liberation Sans, sans-serif" font-weight="bold" font-size="54" textLength="99" lengthAdjust="spacingAndGlyphs" stroke="#000" stroke-width="3" stroke-linejoin="round">yug</text><path transform="translate(121 27) rotate(38)" d="M-7 -9H7L8.500 -5H8.500Q8 5 0 15Q-8 5 -8.500 -5Z"/></g>
<g transform="translate(738.0 254.0) rotate(-42) scale(0.57) translate(-67 -85)" opacity="0.09" fill="#000"><path fill-rule="evenodd" d="M50 45.500H86Q104 45.500 104 63.500V92H108Q112.500 92 112.500 96.500V104.500Q112.500 109 108 109H104V120Q104 124.500 99.500 124.500H86Q81.500 124.500 81.500 120V109H53.500V120Q53.500 124.500 49 124.500H36.500Q32 124.500 32 120V109H26.500Q22 109 22 104.500V96.500Q22 92 26.500 92H32V63.500Q32 45.500 50 45.500ZM57 62.800Q53.300 62.800 53.300 66.500V85.500Q53.300 89.200 57 89.200H77Q80.800 89.200 80.800 85.500V66.500Q80.800 62.800 77 62.800Z"/><text x="116.500" y="110" font-family="Liberation Sans, sans-serif" font-weight="bold" font-size="54" textLength="99" lengthAdjust="spacingAndGlyphs" stroke="#000" stroke-width="3" stroke-linejoin="round">yug</text><path transform="translate(121 27) rotate(38)" d="M-7 -9H7L8.500 -5H8.500Q8 5 0 15Q-8 5 -8.500 -5Z"/></g>
<g transform="translate(943.0 271.0) rotate(-42) scale(0.57) translate(-67 -85)" opacity="0.08" fill="#000"><path fill-rule="evenodd" d="M50 45.500H86Q104 45.500 104 63.500V92H108Q112.500 92 112.500 96.500V104.500Q112.500 109 108 109H104V120Q104 124.500 99.500 124.500H86Q81.500 124.500 81.500 120V109H53.500V120Q53.500 124.500 49 124.500H36.500Q32 124.500 32 120V109H26.500Q22 109 22 104.500V96.500Q22 92 26.500 92H32V63.500Q32 45.500 50 45.500ZM57 62.800Q53.300 62.800 53.300 66.500V85.500Q53.300 89.200 57 89.200H77Q80.800 89.200 80.800 85.500V66.500Q80.800 62.800 77 62.800Z"/><text x="116.500" y="110" font-family="Liberation Sans, sans-serif" font-weight="bold" font-size="54" textLength="99" lengthAdjust="spacingAndGlyphs" stroke="#000" stroke-width="3" stroke-linejoin="round">yug</text><path transform="translate(121 27) rotate(38)" d="M-7 -9H7L8.500 -5H8.500Q8 5 0 15Q-8 5 -8.500 -5Z"/></g>
<g transform="translate(1156.0 275.0) rotate(-42) scale(0.57) translate(-67 -85)" opacity="0.08" fill="#000"><path fill-rule="evenodd" d="M50 45.500H86Q104 45.500 104 63.500V92H108Q112.500 92 112.500 96.500V104.500Q112.500 109 108 109H104V120Q104 124.500 99.500 124.500H86Q81.500 124.500 81.500 120V109H53.500V120Q53.500 124.500 49 124.500H36.500Q32 124.500 32 120V109H26.500Q22 109 22 104.500V96.500Q22 92 26.500 92H32V63.500Q32 45.500 50 45.500ZM57 62.800Q53.300 62.800 53.300 66.500V85.500Q53.300 89.200 57 89.200H77Q80.800 89.200 80.800 85.500V66.500Q80.800 62.800 77 62.800Z"/><text x="116.500" y="110" font-family="Liberation Sans, sans-serif" font-weight="bold" font-size="54" textLength="99" lengthAdjust="spacingAndGlyphs" stroke="#000" stroke-width="3" stroke-linejoin="round">yug</text><path transform="translate(121 27) rotate(38)" d="M-7 -9H7L8.500 -5H8.500Q8 5 0 15Q-8 5 -8.500 -5Z"/></g>
<g transform="translate(152.0 407.0) rotate(-42) scale(0.57) translate(-67 -85)" opacity="0.08" fill="#000"><path fill-rule="evenodd" d="M50 45.500H86Q104 45.500 104 63.500V92H108Q112.500 92 112.500 96.500V104.500Q112.500 109 108 109H104V120Q104 124.500 99.500 124.500H86Q81.500 124.500 81.500 120V109H53.500V120Q53.500 124.500 49 124.500H36.500Q32 124.500 32 120V109H26.500Q22 109 22 104.500V96.500Q22 92 26.500 92H32V63.500Q32 45.500 50 45.500ZM57 62.800Q53.300 62.800 53.300 66.500V85.500Q53.300 89.200 57 89.200H77Q80.800 89.200 80.800 85.500V66.500Q80.800 62.800 77 62.800Z"/><text x="116.500" y="110" font-family="Liberation Sans, sans-serif" font-weight="bold" font-size="54" textLength="99" lengthAdjust="spacingAndGlyphs" stroke="#000" stroke-width="3" stroke-linejoin="round">yug</text><path transform="translate(121 27) rotate(38)" d="M-7 -9H7L8.500 -5H8.500Q8 5 0 15Q-8 5 -8.500 -5Z"/></g>
<g transform="translate(358.0 417.0) rotate(-42) scale(0.57) translate(-67 -85)" opacity="0.09" fill="#000"><path fill-rule="evenodd" d="M50 45.500H86Q104 45.500 104 63.500V92H108Q112.500 92 112.500 96.500V104.500Q112.500 109 108 109H104V120Q104 124.500 99.500 124.500H86Q81.500 124.500 81.500 120V109H53.500V120Q53.500 124.500 49 124.500H36.500Q32 124.500 32 120V109H26.500Q22 109 22 104.500V96.500Q22 92 26.500 92H32V63.500Q32 45.500 50 45.500ZM57 62.800Q53.300 62.800 53.300 66.500V85.500Q53.300 89.200 57 89.200H77Q80.800 89.200 80.800 85.500V66.500Q80.800 62.800 77 62.800Z"/><text x="116.500" y="110" font-family="Liberation Sans, sans-serif" font-weight="bold" font-size="54" textLength="99" lengthAdjust="spacingAndGlyphs" stroke="#000" stroke-width="3" stroke-linejoin="round">yug</text><path transform="translate(121 27) rotate(38)" d="M-7 -9H7L8.500 -5H8.500Q8 5 0 15Q-8 5 -8.500 -5Z"/></g>
<g transform="translate(553.0 427.0) rotate(-42) scale(0.57) translate(-67 -85)" opacity="0.09" fill="#000"><path fill-rule="evenodd" d="M50 45.500H86Q104 45.500 104 63.500V92H108Q112.500 92 112.500 96.500V104.500Q112.500 109 108 109H104V120Q104 124.500 99.500 124.500H86Q81.500 124.500 81.500 120V109H53.500V120Q53.500 124.500 49 124.500H36.500Q32 124.500 32 120V109H26.500Q22 109 22 104.500V96.500Q22 92 26.500 92H32V63.500Q32 45.500 50 45.500ZM57 62.800Q53.300 62.800 53.300 66.500V85.500Q53.300 89.200 57 89.200H77Q80.800 89.200 80.800 85.500V66.500Q80.800 62.800 77 62.800Z"/><text x="116.500" y="110" font-family="Liberation Sans, sans-serif" font-weight="bold" font-size="54" textLength="99" lengthAdjust="spacingAndGlyphs" stroke="#000" stroke-width="3" stroke-linejoin="round">yug</text><path transform="translate(121 27) rotate(38)" d="M-7 -9H7L8.500 -5H8.500Q8 5 0 15Q-8 5 -8.500 -5Z"/></g>
<g transform="translate(752.0 455.0) rotate(-42) scale(0.57) translate(-67 -85)" opacity="0.09" fill="#000"><path fill-rule="evenodd" d="M50 45.500H86Q104 45.500 104 63.500V92H108Q112.500 92 112.500 96.500V104.500Q112.500 109 108 109H104V120Q104 124.500 99.500 124.500H86Q81.500 124.500 81.500 120V109H53.500V120Q53.500 124.500 49 124.500H36.500Q32 124.500 32 120V109H26.500Q22 109 22 104.500V96.500Q22 92 26.500 92H32V63.500Q32 45.500 50 45.500ZM57 62.800Q53.300 62.800 53.300 66.500V85.500Q53.300 89.200 57 89.200H77Q80.800 89.200 80.800 85.500V66.500Q80.800 62.800 77 62.800Z"/><text x="116.500" y="110" font-family="Liberation Sans, sans-serif" font-weight="bold" font-size="54" textLength="99" lengthAdjust="spacingAndGlyphs" stroke="#000" stroke-width="3" stroke-linejoin="round">yug</text><path transform="translate(121 27) rotate(38)" d="M-7 -9H7L8.500 -5H8.500Q8 5 0 15Q-8 5 -8.500 -5Z"/></g>
<g transform="translate(976.0 444.0) rotate(-42) scale(0.57) translate(-67 -85)" opacity="0.08" fill="#000"><path fill-rule="evenodd" d="M50 45.500H86Q104 45.500 104 63.500V92H108Q112.500 92 112.500 96.500V104.500Q112.500 109 108 109H104V120Q104 124.500 99.500 124.500H86Q81.500 124.500 81.500 120V109H53.500V120Q53.500 124.500 49 124.500H36.500Q32 124.500 32 120V109H26.500Q22 109 22 104.500V96.500Q22 92 26.500 92H32V63.500Q32 45.500 50 45.500ZM57 62.800Q53.300 62.800 53.300 66.500V85.500Q53.300 89.200 57 89.200H77Q80.800 89.200 80.800 85.500V66.500Q80.800 62.800 77 62.800Z"/><text x="116.500" y="110" font-family="Liberation Sans, sans-serif" font-weight="bold" font-size="54" textLength="99" lengthAdjust="spacingAndGlyphs" stroke="#000" stroke-width="3" stroke-linejoin="round">yug</text><path transform="translate(121 27) rotate(38)" d="M-7 -9H7L8.500 -5H8.500Q8 5 0 15Q-8 5 -8.500 -5Z"/></g>
<g transform="translate(1176.0 470.0) rotate(-42) scale(0.57) translate(-67 -85)" opacity="0.08" fill="#000"><path fill-rule="evenodd" d="M50 45.500H86Q104 45.500 104 63.500V92H108Q112.500 92 112.500 96.500V104.500Q112.500 109 108 109H104V120Q104 124.500 99.500 124.500H86Q81.500 124.500 81.500 120V109H53.500V120Q53.500 124.500 49 124.500H36.500Q32 124.500 32 120V109H26.500Q22 109 22 104.500V96.500Q22 92 26.500 92H32V63.500Q32 45.500 50 45.500ZM57 62.800Q53.300 62.800 53.300 66.500V85.500Q53.300 89.200 57 89.200H77Q80.800 89.200 80.800 85.500V66.500Q80.800 62.800 77 62.800Z"/><text x="116.500" y="110" font-family="Liberation Sans, sans-serif" font-weight="bold" font-size="54" textLength="99" lengthAdjust="spacingAndGlyphs" stroke="#000" stroke-width="3" stroke-linejoin="round">yug</text><path transform="translate(121 27) rotate(38)" d="M-7 -9H7L8.500 -5H8.500Q8 5 0 15Q-8 5 -8.500 -5Z"/></g>
<g transform="translate(163.0 621.0) rotate(-42) scale(0.57) translate(-67 -85)" opacity="0.12" fill="#000"><path fill-rule="evenodd" d="M50 45.500H86Q104 45.500 104 63.500V92H108Q112.500 92 112.500 96.500V104.500Q112.500 109 108 109H104V120Q104 124.500 99.500 124.500H86Q81.500 124.500 81.500 120V109H53.500V120Q53.500 124.500 49 124.500H36.500Q32 124.500 32 120V109H26.500Q22 109 22 104.500V96.500Q22 92 26.500 92H32V63.500Q32 45.500 50 45.500ZM57 62.800Q53.300 62.800 53.300 66.500V85.500Q53.300 89.200 57 89.200H77Q80.800 89.200 80.800 85.500V66.500Q80.800 62.800 77 62.800Z"/><text x="116.500" y="110" font-family="Liberation Sans, sans-serif" font-weight="bold" font-size="54" textLength="99" lengthAdjust="spacingAndGlyphs" stroke="#000" stroke-width="3" stroke-linejoin="round">yug</text><path transform="translate(121 27) rotate(38)" d="M-7 -9H7L8.500 -5H8.500Q8 5 0 15Q-8 5 -8.500 -5Z"/></g>
<g transform="translate(370.0 621.0) rotate(-42) scale(0.57) translate(-67 -85)" opacity="0.13" fill="#000"><path fill-rule="evenodd" d="M50 45.500H86Q104 45.500 104 63.500V92H108Q112.500 92 112.500 96.500V104.500Q112.500 109 108 109H104V120Q104 124.500 99.500 124.500H86Q81.500 124.500 81.500 120V109H53.500V120Q53.500 124.500 49 124.500H36.500Q32 124.500 32 120V109H26.500Q22 109 22 104.500V96.500Q22 92 26.500 92H32V63.500Q32 45.500 50 45.500ZM57 62.800Q53.300 62.800 53.300 66.500V85.500Q53.300 89.200 57 89.200H77Q80.800 89.200 80.800 85.500V66.500Q80.800 62.800 77 62.800Z"/><text x="116.500" y="110" font-family="Liberation Sans, sans-serif" font-weight="bold" font-size="54" textLength="99" lengthAdjust="spacingAndGlyphs" stroke="#000" stroke-width="3" stroke-linejoin="round">yug</text><path transform="translate(121 27) rotate(38)" d="M-7 -9H7L8.500 -5H8.500Q8 5 0 15Q-8 5 -8.500 -5Z"/></g>
<g transform="translate(570.0 645.0) rotate(-42) scale(0.57) translate(-67 -85)" opacity="0.13" fill="#000"><path fill-rule="evenodd" d="M50 45.500H86Q104 45.500 104 63.500V92H108Q112.500 92 112.500 96.500V104.500Q112.500 109 108 109H104V120Q104 124.500 99.500 124.500H86Q81.500 124.500 81.500 120V109H53.500V120Q53.500 124.500 49 124.500H36.500Q32 124.500 32 120V109H26.500Q22 109 22 104.500V96.500Q22 92 26.500 92H32V63.500Q32 45.500 50 45.500ZM57 62.800Q53.300 62.800 53.300 66.500V85.500Q53.300 89.200 57 89.200H77Q80.800 89.200 80.800 85.500V66.500Q80.800 62.800 77 62.800Z"/><text x="116.500" y="110" font-family="Liberation Sans, sans-serif" font-weight="bold" font-size="54" textLength="99" lengthAdjust="spacingAndGlyphs" stroke="#000" stroke-width="3" stroke-linejoin="round">yug</text><path transform="translate(121 27) rotate(38)" d="M-7 -9H7L8.500 -5H8.500Q8 5 0 15Q-8 5 -8.500 -5Z"/></g>
<g transform="translate(770.0 658.0) rotate(-42) scale(0.57) translate(-67 -85)" opacity="0.13" fill="#000"><path fill-rule="evenodd" d="M50 45.500H86Q104 45.500 104 63.500V92H108Q112.500 92 112.500 96.500V104.500Q112.500 109 108 109H104V120Q104 124.500 99.500 124.500H86Q81.500 124.500 81.500 120V109H53.500V120Q53.500 124.500 49 124.500H36.500Q32 124.500 32 120V109H26.500Q22 109 22 104.500V96.500Q22 92 26.500 92H32V63.500Q32 45.500 50 45.500ZM57 62.800Q53.300 62.800 53.300 66.500V85.500Q53.300 89.200 57 89.200H77Q80.800 89.200 80.800 85.500V66.500Q80.800 62.800 77 62.800Z"/><text x="116.500" y="110" font-family="Liberation Sans, sans-serif" font-weight="bold" font-size="54" textLength="99" lengthAdjust="spacingAndGlyphs" stroke="#000" stroke-width="3" stroke-linejoin="round">yug</text><path transform="translate(121 27) rotate(38)" d="M-7 -9H7L8.500 -5H8.500Q8 5 0 15Q-8 5 -8.500 -5Z"/></g>
<g transform="translate(976.0 675.0) rotate(-42) scale(0.57) translate(-67 -85)" opacity="0.13" fill="#000"><path fill-rule="evenodd" d="M50 45.500H86Q104 45.500 104 63.500V92H108Q112.500 92 112.500 96.500V104.500Q112.500 109 108 109H104V120Q104 124.500 99.500 124.500H86Q81.500 124.500 81.500 120V109H53.500V120Q53.500 124.500 49 124.500H36.500Q32 124.500 32 120V109H26.500Q22 109 22 104.500V96.500Q22 92 26.500 92H32V63.500Q32 45.500 50 45.500ZM57 62.800Q53.300 62.800 53.300 66.500V85.500Q53.300 89.200 57 89.200H77Q80.800 89.200 80.800 85.500V66.500Q80.800 62.800 77 62.800Z"/><text x="116.500" y="110" font-family="Liberation Sans, sans-serif" font-weight="bold" font-size="54" textLength="99" lengthAdjust="spacingAndGlyphs" stroke="#000" stroke-width="3" stroke-linejoin="round">yug</text><path transform="translate(121 27) rotate(38)" d="M-7 -9H7L8.500 -5H8.500Q8 5 0 15Q-8 5 -8.500 -5Z"/></g>
<g transform="translate(1176.0 685.0) rotate(-42) scale(0.57) translate(-67 -85)" opacity="0.08" fill="#000"><path fill-rule="evenodd" d="M50 45.500H86Q104 45.500 104 63.500V92H108Q112.500 92 112.500 96.500V104.500Q112.500 109 108 109H104V120Q104 124.500 99.500 124.500H86Q81.500 124.500 81.500 120V109H53.500V120Q53.500 124.500 49 124.500H36.500Q32 124.500 32 120V109H26.500Q22 109 22 104.500V96.500Q22 92 26.500 92H32V63.500Q32 45.500 50 45.500ZM57 62.800Q53.300 62.800 53.300 66.500V85.500Q53.300 89.200 57 89.200H77Q80.800 89.200 80.800 85.500V66.500Q80.800 62.800 77 62.800Z"/><text x="116.500" y="110" font-family="Liberation Sans, sans-serif" font-weight="bold" font-size="54" textLength="99" lengthAdjust="spacingAndGlyphs" stroke="#000" stroke-width="3" stroke-linejoin="round">yug</text><path transform="translate(121 27) rotate(38)" d="M-7 -9H7L8.500 -5H8.500Q8 5 0 15Q-8 5 -8.500 -5Z"/></g>
</g></svg>
<svg id="url" style="left:0;top:0" width="1300" height="731" viewBox="0 0 1300 731">
<defs><linearGradient id="gA2" x1="0" y1="45" x2="0" y2="125" gradientUnits="userSpaceOnUse"><stop offset="0" stop-color="#2aa8ff"/><stop offset=".5" stop-color="#6a6ef8"/><stop offset="1" stop-color="#b838f8"/></linearGradient></defs>
<circle cx="590" cy="697" r="15" fill="#f8b62c"/>
<g transform="translate(589.500 698) scale(.2) translate(-67 -85)"><path fill="url(#gA2)" fill-rule="evenodd" d="M50 45.500H86Q104 45.500 104 63.500V92H108Q112.500 92 112.500 96.500V104.500Q112.500 109 108 109H104V120Q104 124.500 99.500 124.500H86Q81.500 124.500 81.500 120V109H53.500V120Q53.500 124.500 49 124.500H36.500Q32 124.500 32 120V109H26.500Q22 109 22 104.500V96.500Q22 92 26.500 92H32V63.500Q32 45.500 50 45.500ZM57 62.800Q53.300 62.800 53.300 66.500V85.500Q53.300 89.200 57 89.200H77Q80.800 89.200 80.800 85.500V66.500Q80.800 62.800 77 62.800Z"/></g>
<path d="M596 689L598.500 686" stroke="#c0408a" stroke-width="1.600" stroke-linecap="round"/>
<text x="611.300" y="703.300" font-family="Liberation Sans, sans-serif" font-weight="bold" font-size="18.500" textLength="163" lengthAdjust="spacingAndGlyphs" fill="#2a4668" opacity=".45" transform="translate(.8 1)">www.toonyug.com</text>
<text x="611.300" y="703.300" font-family="Liberation Sans, sans-serif" font-weight="bold" font-size="18.500" textLength="163" lengthAdjust="spacingAndGlyphs" fill="#ffffff">www.toonyug.com</text>
</svg>
<!--/WM--><!--OVERLAY-->
<svg id="logo" style="left:0;top:0" width="260" height="150" viewBox="0 0 260 150">
<defs>
<linearGradient id="gA" x1="0" y1="45" x2="0" y2="125" gradientUnits="userSpaceOnUse"><stop offset="0" stop-color="#10b4ff"/><stop offset=".5" stop-color="#6a6ef8"/><stop offset="1" stop-color="#c62cff"/></linearGradient>
<linearGradient id="gY" x1="0" y1="80" x2="0" y2="125" gradientUnits="userSpaceOnUse"><stop offset="0" stop-color="#fbb90c"/><stop offset="1" stop-color="#ff8412"/></linearGradient>
<filter id="glowA" x="-20%" y="-20%" width="140%" height="140%"><feGaussianBlur stdDeviation="2.2"/></filter>
</defs>
<path filter="url(#glowA)" opacity=".5" fill="#6a4a1a" fill-rule="evenodd" d="M50 45.500H86Q104 45.500 104 63.500V92H108Q112.500 92 112.500 96.500V104.500Q112.500 109 108 109H104V120Q104 124.500 99.500 124.500H86Q81.500 124.500 81.500 120V109H53.500V120Q53.500 124.500 49 124.500H36.500Q32 124.500 32 120V109H26.500Q22 109 22 104.500V96.500Q22 92 26.500 92H32V63.500Q32 45.500 50 45.500ZM57 62.800Q53.300 62.800 53.300 66.500V85.500Q53.300 89.200 57 89.200H77Q80.800 89.200 80.800 85.500V66.500Q80.800 62.800 77 62.800Z"/>
<path fill="url(#gA)" fill-rule="evenodd" d="M50 45.500H86Q104 45.500 104 63.500V92H108Q112.500 92 112.500 96.500V104.500Q112.500 109 108 109H104V120Q104 124.500 99.500 124.500H86Q81.500 124.500 81.500 120V109H53.500V120Q53.500 124.500 49 124.500H36.500Q32 124.500 32 120V109H26.500Q22 109 22 104.500V96.500Q22 92 26.500 92H32V63.500Q32 45.500 50 45.500ZM57 62.800Q53.300 62.800 53.300 66.500V85.500Q53.300 89.200 57 89.200H77Q80.800 89.200 80.800 85.500V66.500Q80.800 62.800 77 62.800Z"/>
<g transform="translate(115.500 0) scale(.92 1)"><text x="0" y="111" font-family="Liberation Sans, sans-serif" font-weight="bold" font-size="56" letter-spacing="5.500" fill="#c98a20" stroke="#c98a20" stroke-width="7" stroke-linejoin="round" opacity=".5" filter="url(#glowA)">yug</text>
<text x="0" y="111" font-family="Liberation Sans, sans-serif" font-weight="bold" font-size="56" letter-spacing="5.500" fill="url(#gY)" stroke="url(#gY)" stroke-width="3" stroke-linejoin="round">yug</text></g>
<g transform="translate(111 40.500) rotate(32)">
<linearGradient id="gN" x1="-8" y1="0" x2="8" y2="0" gradientUnits="userSpaceOnUse"><stop offset="0" stop-color="#b034ff"/><stop offset=".5" stop-color="#6f5cff"/><stop offset="1" stop-color="#2b90ff"/></linearGradient>
<path d="M-6.500 -24H6.500L7 -27.500H-7Z" fill="#ff9a1a"/>
<path d="M0 0L-8.500 -11L-6 -23.300H6L8.500 -11Z" fill="url(#gN)"/>
<path d="M0 -1V-13" stroke="#fff" stroke-width="1.100"/><circle cx="0" cy="-13.500" r="1.400" fill="#fff"/>
</g>
<circle cx="89.500" cy="31" r="1" fill="#e8f0ff"/><circle cx="107.500" cy="44.500" r="1.100" fill="#dfe8ff"/><circle cx="126.500" cy="52" r=".9" fill="#cfd8f0"/>
</svg>
<!--/OVERLAY-->
</div>
</body>
</html>
